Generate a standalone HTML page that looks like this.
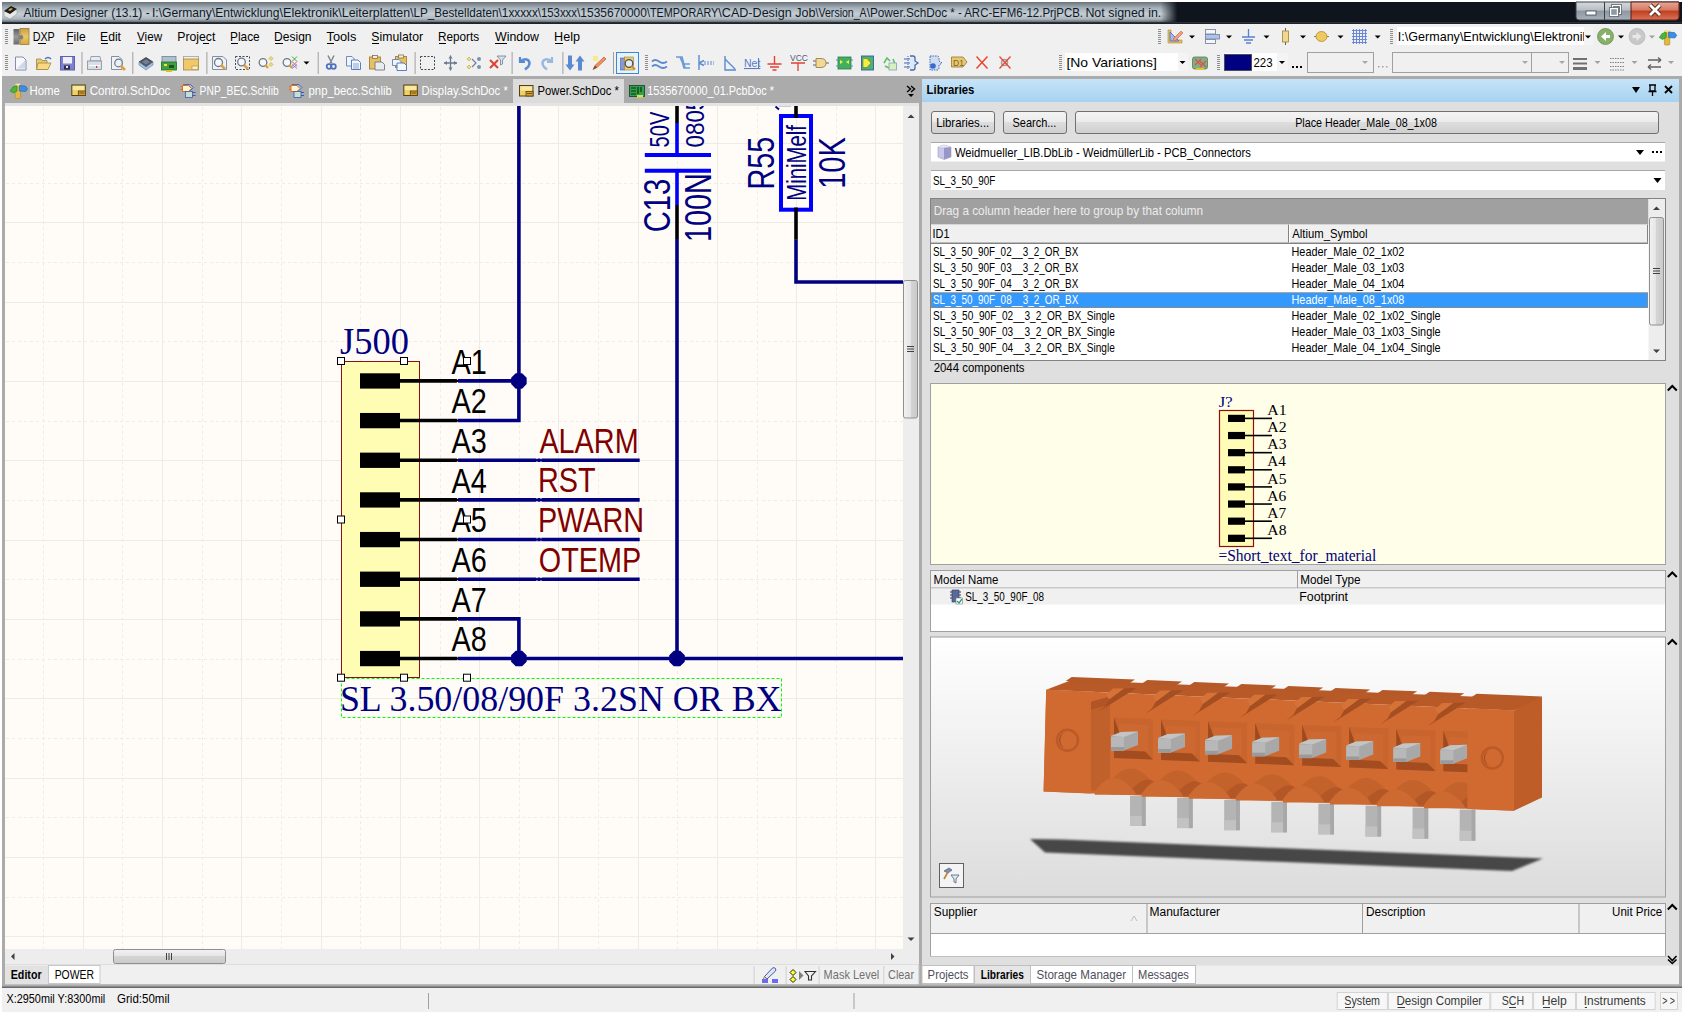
<!DOCTYPE html><html><head><meta charset='utf-8'><style>*{margin:0;padding:0}html,body{width:1684px;height:1014px;overflow:hidden;background:#fff;position:relative}text{white-space:pre}</style></head><body><svg width="1684" height="1014" viewBox="0 0 1684 1014" style="position:absolute;left:0;top:0"><rect x="0" y="0" width="1684" height="1014" fill="#ffffff" />
<rect x="2" y="2" width="1680" height="1010" fill="#f0f0f0" />
<defs>
<linearGradient id="gGlow" x1="0" y1="0" x2="0" y2="1">
 <stop offset="0" stop-color="#6a737b"/><stop offset="0.3" stop-color="#a6b0b8"/><stop offset="0.6" stop-color="#c4ced4"/><stop offset="0.85" stop-color="#acb6bc"/><stop offset="1" stop-color="#646e76"/></linearGradient>
<linearGradient id="gGlowH" x1="0" y1="0" x2="1" y2="0">
 <stop offset="0" stop-color="#fff" stop-opacity="1"/><stop offset="0.982" stop-color="#fff" stop-opacity="1"/><stop offset="0.996" stop-color="#fff" stop-opacity="0"/></linearGradient>
<mask id="mGlow"><rect x="2" y="2" width="1180" height="21" fill="url(#gGlowH)"/></mask>
<linearGradient id="gWinBtn" x1="0" y1="0" x2="0" y2="1">
 <stop offset="0" stop-color="#d6dade"/><stop offset="0.45" stop-color="#b8bec4"/><stop offset="0.5" stop-color="#8e98a2"/><stop offset="1" stop-color="#a8b0b8"/></linearGradient>
<linearGradient id="gClose" x1="0" y1="0" x2="0" y2="1">
 <stop offset="0" stop-color="#e8a898"/><stop offset="0.45" stop-color="#d47a64"/><stop offset="0.5" stop-color="#c2401e"/><stop offset="1" stop-color="#d8735a"/></linearGradient>
<linearGradient id="gHdr" x1="0" y1="0" x2="0" y2="1">
 <stop offset="0" stop-color="#c6e4f8"/><stop offset="1" stop-color="#a6d2f0"/></linearGradient>
<linearGradient id="gBtn" x1="0" y1="0" x2="0" y2="1">
 <stop offset="0" stop-color="#f4f4f4"/><stop offset="0.5" stop-color="#ebebeb"/><stop offset="0.5" stop-color="#dddddd"/><stop offset="1" stop-color="#cfcfcf"/></linearGradient>
<linearGradient id="g3d" x1="0" y1="0" x2="0" y2="1">
 <stop offset="0" stop-color="#ffffff"/><stop offset="1" stop-color="#dcdcdc"/></linearGradient>
<linearGradient id="gThumbV" x1="0" y1="0" x2="1" y2="0">
 <stop offset="0" stop-color="#f2f2f2"/><stop offset="0.5" stop-color="#e4e4e4"/><stop offset="0.5" stop-color="#d4d4d4"/><stop offset="1" stop-color="#cacaca"/></linearGradient>
<linearGradient id="gThumbH" x1="0" y1="0" x2="0" y2="1">
 <stop offset="0" stop-color="#f2f2f2"/><stop offset="0.5" stop-color="#e4e4e4"/><stop offset="0.5" stop-color="#d4d4d4"/><stop offset="1" stop-color="#cacaca"/></linearGradient>
</defs>
<rect x="2" y="2" width="1680" height="21" fill="#10151d" />
<rect x="2" y="2" width="1180" height="20" fill="url(#gGlow)" mask="url(#mGlow)"/>
<rect x="2" y="22" width="1680" height="1" fill="#2a3038" />
<rect x="2" y="23" width="1680" height="1" fill="#1e242c" />
<g transform="translate(3,5)"><path d="M1 7 L8 2 L14 5 L14 9 L7 14 L1 11 Z" fill="#e8e8e8" stroke="#9a9a9a" stroke-width="0.6"/><path d="M1 6 L8 1 L14 4 L7 9 Z" fill="#1c1c1c"/><path d="M5 5 L8 3 L10 4 L7 6 Z" fill="#d4a838"/></g>
<text transform="translate(23.60,17) scale(0.9553,1)" font-family="Liberation Sans" font-size="12.5" fill="#101828">Altium Designer (13.1) - </text>
<text transform="translate(151.91,17) scale(0.9704,1)" font-family="Liberation Sans" font-size="12.5" fill="#101828">I:\Germany</text>
<text transform="translate(211.90,17) scale(0.9648,1)" font-family="Liberation Sans" font-size="12.5" fill="#101828">\Entwicklung</text>
<text transform="translate(279.60,17) scale(1.0059,1)" font-family="Liberation Sans" font-size="12.5" fill="#101828">\Elektronik</text>
<text transform="translate(338.30,17) scale(0.9949,1)" font-family="Liberation Sans" font-size="12.5" fill="#101828">\Leiterplatten</text>
<text transform="translate(410.20,17) scale(0.9353,1)" font-family="Liberation Sans" font-size="12.5" fill="#101828">\LP_Bestelldaten</text>
<text transform="translate(498.60,17) scale(0.9406,1)" font-family="Liberation Sans" font-size="12.5" fill="#101828">\1xxxxx</text>
<text transform="translate(537.80,17) scale(0.9100,1)" font-family="Liberation Sans" font-size="12.5" fill="#101828">\153xxx</text>
<text transform="translate(577.00,17) scale(0.9590,1)" font-family="Liberation Sans" font-size="12.5" fill="#101828">\1535670000</text>
<text transform="translate(647.00,17) scale(0.8651,1)" font-family="Liberation Sans" font-size="12.5" fill="#101828">\TEMPORARY</text>
<text transform="translate(718.30,17) scale(1.0077,1)" font-family="Liberation Sans" font-size="12.5" fill="#101828">\CAD-Design Job</text>
<text transform="translate(815.60,17) scale(0.8453,1)" font-family="Liberation Sans" font-size="12.5" fill="#101828">\Version_A</text>
<text transform="translate(866.70,17) scale(0.9423,1)" font-family="Liberation Sans" font-size="12.5" fill="#101828">\Power.SchDoc </text>
<text transform="translate(950.27,17) scale(0.9158,1)" font-family="Liberation Sans" font-size="12.5" fill="#101828">* - ARC-EFM6-12.PrjPCB. </text>
<text transform="translate(1085.41,17) scale(0.9936,1)" font-family="Liberation Sans" font-size="12.5" fill="#101828" >Not signed in.</text>
<path d="M1576 2 L1679 2 L1679 17 Q1679 20 1676 20 L1579 20 Q1576 20 1576 17 Z" fill="url(#gWinBtn)" stroke="#3a4048" stroke-width="1"/>
<path d="M1631 2 L1679 2 L1679 17 Q1679 20 1676 20 L1631 20 Z" fill="url(#gClose)" stroke="#5a1a10" stroke-width="1"/>
<line x1="1604.5" y1="2" x2="1604.5" y2="20" stroke="#3a4048" stroke-width="1" />
<rect x="1586" y="11" width="10" height="4" fill="#ffffff" stroke="#404850" stroke-width="0.8"/>
<rect x="1612.5" y="5.5" width="8" height="8" fill="none" stroke="#3a4048" stroke-width="2.6"/>
<rect x="1612.5" y="5.5" width="8" height="8" fill="none" stroke="#ffffff" stroke-width="1.4"/>
<rect x="1610.5" y="8.5" width="7" height="7" fill="#8a9aa8" stroke="#3a4048" stroke-width="2.6"/>
<rect x="1610.5" y="8.5" width="7" height="7" fill="#8a9aa8" stroke="#ffffff" stroke-width="1.4"/>
<path d="M1650 5 L1660 15 M1660 5 L1650 15" stroke="#5a2a20" stroke-width="4.6"/><path d="M1650 5 L1660 15 M1660 5 L1650 15" stroke="#ffffff" stroke-width="2.8"/>
<rect x="5" y="29" width="3" height="1" fill="#8e8e8e" />
<rect x="5" y="31" width="3" height="1" fill="#8e8e8e" />
<rect x="5" y="33" width="3" height="1" fill="#8e8e8e" />
<rect x="5" y="35" width="3" height="1" fill="#8e8e8e" />
<rect x="5" y="37" width="3" height="1" fill="#8e8e8e" />
<rect x="5" y="39" width="3" height="1" fill="#8e8e8e" />
<rect x="5" y="41" width="3" height="1" fill="#8e8e8e" />
<rect x="5" y="43" width="3" height="1" fill="#8e8e8e" />
<defs><linearGradient id="gDxpG" x1="0" y1="0" x2="0" y2="1"><stop offset="0" stop-color="#606060"/><stop offset="0.5" stop-color="#9a9a9a"/><stop offset="1" stop-color="#6a6a6a"/></linearGradient><linearGradient id="gDxpY" x1="0" y1="0" x2="0" y2="1"><stop offset="0" stop-color="#c8a048"/><stop offset="0.5" stop-color="#e8c868"/><stop offset="1" stop-color="#d0a840"/></linearGradient></defs>
<g transform="translate(13.5,29)"><rect x="0" y="0" width="6" height="15.5" fill="url(#gDxpG)"/><rect x="6.5" y="-0.5" width="9" height="16" fill="url(#gDxpY)" stroke="#a07a30" stroke-width="0.8"/><path d="M6.5 4.5 A4 4 0 0 1 6.5 12 Z" fill="#f4ecd8" stroke="#a07a30" stroke-width="0.6"/><circle cx="7.3" cy="8.3" r="2.4" fill="#808080"/></g>
<text transform="translate(32.64,41) scale(0.8981,1)" font-family="Liberation Sans" font-size="12" fill="#000" >DXP</text>
<text transform="translate(66.23,41) scale(1.0067,1)" font-family="Liberation Sans" font-size="12" fill="#000" >File</text>
<text transform="translate(100.02,41) scale(1.0163,1)" font-family="Liberation Sans" font-size="12" fill="#000" >Edit</text>
<text transform="translate(137.08,41) scale(0.9696,1)" font-family="Liberation Sans" font-size="12" fill="#000" >View</text>
<text transform="translate(177.22,41) scale(1.0210,1)" font-family="Liberation Sans" font-size="12" fill="#000" >Project</text>
<text transform="translate(230.05,41) scale(0.9874,1)" font-family="Liberation Sans" font-size="12" fill="#000" >Place</text>
<text transform="translate(274.04,41) scale(1.0045,1)" font-family="Liberation Sans" font-size="12" fill="#000" >Design</text>
<text transform="translate(326.54,41) scale(1.0646,1)" font-family="Liberation Sans" font-size="12" fill="#000" >Tools</text>
<text transform="translate(371.29,41) scale(1.0216,1)" font-family="Liberation Sans" font-size="12" fill="#000" >Simulator</text>
<text transform="translate(437.96,41) scale(0.9813,1)" font-family="Liberation Sans" font-size="12" fill="#000" >Reports</text>
<text transform="translate(495.00,41) scale(1.0305,1)" font-family="Liberation Sans" font-size="12" fill="#000" >Window</text>
<text transform="translate(554.09,41) scale(1.0524,1)" font-family="Liberation Sans" font-size="12" fill="#000" >Help</text>
<rect x="38" y="43" width="8" height="1" fill="#000" />
<rect x="67" y="43" width="6" height="1" fill="#000" />
<rect x="101" y="43" width="7" height="1" fill="#000" />
<rect x="137" y="43" width="8" height="1" fill="#000" />
<rect x="203" y="43" width="6" height="1" fill="#000" />
<rect x="231" y="43" width="7" height="1" fill="#000" />
<rect x="275" y="43" width="8" height="1" fill="#000" />
<rect x="327" y="43" width="7" height="1" fill="#000" />
<rect x="372" y="43" width="7" height="1" fill="#000" />
<rect x="439" y="43" width="7" height="1" fill="#000" />
<rect x="495" y="43" width="12" height="1" fill="#000" />
<rect x="555" y="43" width="8" height="1" fill="#000" />
<rect x="1158" y="29" width="3" height="1" fill="#8e8e8e" />
<rect x="1158" y="31" width="3" height="1" fill="#8e8e8e" />
<rect x="1158" y="33" width="3" height="1" fill="#8e8e8e" />
<rect x="1158" y="35" width="3" height="1" fill="#8e8e8e" />
<rect x="1158" y="37" width="3" height="1" fill="#8e8e8e" />
<rect x="1158" y="39" width="3" height="1" fill="#8e8e8e" />
<rect x="1158" y="41" width="3" height="1" fill="#8e8e8e" />
<rect x="1158" y="43" width="3" height="1" fill="#8e8e8e" />
<g transform="translate(1167,29)"><path d="M1 14 L15 14 L15 11 L4 11 L4 1 L1 1 Z" fill="#e8c060" stroke="#b08830" stroke-width="0.6"/><path d="M3 3 L3 12 L12 12 Z" fill="#a8b8e8" stroke="#4868b8" stroke-width="0.8"/><path d="M6 10 L14 2 L16 4 L8 12 Z" fill="#f0a080" stroke="#c06040" stroke-width="0.6"/></g>
<path d="M1189 35.5 L1195 35.5 L1192 38.5 Z" fill="#000"/>
<g transform="translate(1205,29)"><rect x="0.5" y="0.5" width="10" height="4.5" fill="#f4f6fa" stroke="#8088a0" stroke-width="0.9"/><rect x="0.5" y="5.5" width="14" height="4.5" fill="#a8c4f0" stroke="#8088a0" stroke-width="0.9"/><rect x="0.5" y="10.5" width="10" height="4" fill="#f4f6fa" stroke="#8088a0" stroke-width="0.9"/></g>
<path d="M1226 35.5 L1232 35.5 L1229 38.5 Z" fill="#000"/>
<g transform="translate(1241,29)"><path d="M7.5 0 L7.5 8 M1 8 L14 8 M3 11 L12 11 M5 14 L10 14" stroke="#5880d0" stroke-width="1.3"/></g>
<path d="M1263.5 35.5 L1269.5 35.5 L1266.5 38.5 Z" fill="#000"/>
<g transform="translate(1282,28)"><path d="M3.5 0 L3.5 17" stroke="#606060" stroke-width="1"/><rect x="0.5" y="3" width="6" height="11" fill="#f0d890" stroke="#a08030" stroke-width="0.8"/></g>
<path d="M1300 35.5 L1306 35.5 L1303 38.5 Z" fill="#000"/>
<g transform="translate(1314,29)"><path d="M0 7.5 L15 7.5" stroke="#808080" stroke-width="1"/><ellipse cx="7.5" cy="7.5" rx="5.5" ry="5" fill="#f0c860" stroke="#b08830" stroke-width="0.8"/></g>
<path d="M1337.5 35.5 L1343.5 35.5 L1340.5 38.5 Z" fill="#000"/>
<g transform="translate(1352,29)"><path d="M0 1.5 H15 M0 4.5 H15 M0 7.5 H15 M0 10.5 H15 M0 13.5 H15 M1.5 0 V15 M4.5 0 V15 M7.5 0 V15 M10.5 0 V15 M13.5 0 V15" stroke="#6a88d8" stroke-width="1"/></g>
<path d="M1374.7 35.5 L1380.7 35.5 L1377.7 38.5 Z" fill="#000"/>
<rect x="1390" y="29" width="3" height="1" fill="#8e8e8e" />
<rect x="1390" y="31" width="3" height="1" fill="#8e8e8e" />
<rect x="1390" y="33" width="3" height="1" fill="#8e8e8e" />
<rect x="1390" y="35" width="3" height="1" fill="#8e8e8e" />
<rect x="1390" y="37" width="3" height="1" fill="#8e8e8e" />
<rect x="1390" y="39" width="3" height="1" fill="#8e8e8e" />
<rect x="1390" y="41" width="3" height="1" fill="#8e8e8e" />
<rect x="1390" y="43" width="3" height="1" fill="#8e8e8e" />
<rect x="1397" y="27" width="196" height="18" fill="#ffffff" />
<rect x="1584" y="27" width="9" height="18" fill="#f4f4f4" />
<path d="M1585 35.5 L1591 35.5 L1588 38.5 Z" fill="#000"/>
<defs><clipPath id="clipNav"><rect x="1397" y="25" width="187" height="22"/></clipPath></defs><g clip-path="url(#clipNav)">
<text transform="translate(1397.87,41) scale(1.0458,1)" font-family="Liberation Sans" font-size="12" fill="#000" >I:\Germany\Entwicklung\Elektronik</text>
</g>
<g transform="translate(1597,28)"><circle cx="8.5" cy="8.5" r="8" fill="#88b068" stroke="#6a9050" stroke-width="0.8"/><path d="M4 8.5 L9 4 L9 7 L13 7 L13 10 L9 10 L9 13 Z" fill="#ffffff"/></g>
<path d="M1618 35.5 L1624 35.5 L1621 38.5 Z" fill="#000"/>
<g transform="translate(1629,28)"><circle cx="8" cy="8.5" r="8" fill="#c8c8c8" stroke="#b8b8b8" stroke-width="0.8"/><path d="M12.5 8.5 L7.5 4 L7.5 7 L3.5 7 L3.5 10 L7.5 10 L7.5 13 Z" fill="#e8e8e8"/></g>
<path d="M1649 35.5 L1655 35.5 L1652 38.5 Z" fill="#a0a0a0"/>
<g transform="translate(1659,29)"><rect x="5.4" y="2" width="5.4" height="14" rx="1" fill="#e4b840" stroke="#b08828" stroke-width="0.6"/><ellipse cx="8.1" cy="2.2" rx="2.8" ry="1.3" fill="#f4e4a0"/><path d="M0.3 8.5 L3 4.6 L7.2 3.2 L7.2 8.6 L3.4 10.4 Z" fill="#48b838" stroke="#2a8020" stroke-width="0.6"/><path d="M9.6 3 L15.6 3.6 L17.8 6.4 L15.8 9 L9.6 8.6 Z" fill="#3a8ee8" stroke="#2462b0" stroke-width="0.6"/></g>
<rect x="5" y="55" width="3" height="1" fill="#8e8e8e" />
<rect x="5" y="57" width="3" height="1" fill="#8e8e8e" />
<rect x="5" y="59" width="3" height="1" fill="#8e8e8e" />
<rect x="5" y="61" width="3" height="1" fill="#8e8e8e" />
<rect x="5" y="63" width="3" height="1" fill="#8e8e8e" />
<rect x="5" y="65" width="3" height="1" fill="#8e8e8e" />
<rect x="5" y="67" width="3" height="1" fill="#8e8e8e" />
<rect x="5" y="69" width="3" height="1" fill="#8e8e8e" />
<g transform="translate(15,56.5)"><path d="M0.5 0.5 L8 0.5 L11 3.5 L11 13.5 L0.5 13.5 Z" fill="#f8f8fc" stroke="#8090a8" stroke-width="1"/><path d="M2 12 L10 12 L10 4 Z" fill="#d0d8e8"/></g>
<g transform="translate(36,56)"><path d="M0.5 3 L5 3 L6 4.5 L11 4.5 L11 13.5 L0.5 13.5 Z" fill="#e8c870" stroke="#a08848" stroke-width="0.8"/><path d="M2 7 L15 7 L12 13.5 L0.5 13.5 Z" fill="#f8d880" stroke="#a08848" stroke-width="0.8"/><path d="M9 3 Q12 0 15 3" stroke="#4878c0" stroke-width="1.6" fill="none"/></g>
<g transform="translate(60,56)"><rect x="0.5" y="0.5" width="14" height="13.5" fill="#8080d0" stroke="#6060b0" stroke-width="1"/><rect x="3" y="1" width="9" height="6.5" fill="#f0f0f8"/><rect x="4" y="9.5" width="6" height="4" fill="#303040"/><rect x="6" y="10" width="2" height="2" fill="#f0f0f0"/></g>
<rect x="81.5" y="52" width="1" height="22" fill="#a0a0a0" />
<g transform="translate(87,56)"><path d="M4 0.5 L13 0.5 L14 5 L3 5 Z" fill="#e8ecf0" stroke="#8090a0" stroke-width="0.8"/><rect x="0.5" y="5" width="14" height="8.5" fill="#d8dee4" stroke="#8090a0" stroke-width="0.8"/><rect x="2" y="9" width="11" height="1" fill="#ffffff"/><rect x="9" y="10" width="1.2" height="1.8" fill="#d02020"/></g>
<g transform="translate(111,56)"><path d="M0.5 0.5 L8 0.5 L11 3.5 L11 13.5 L0.5 13.5 Z" fill="#f0f2f8" stroke="#8090a8" stroke-width="1"/><circle cx="7.5" cy="7" r="3.8" fill="#e8f0f8" stroke="#707880" stroke-width="1.2"/><path d="M10 10 L14 14" stroke="#e0a040" stroke-width="2.5"/></g>
<rect x="132.3" y="52" width="1" height="22" fill="#a0a0a0" />
<g transform="translate(138,56)"><path d="M1 6 L8 1.5 L15 6 L8 11 Z" fill="#505868" stroke="#303848" stroke-width="0.8"/><path d="M1 6 L1 9 L8 14 L15 9 L15 6 L8 11 Z" fill="#a8c0e0" stroke="#6080a8" stroke-width="0.6"/><path d="M4 6 L8 3.5 L12 6 L8 8.5 Z" fill="#788090"/></g>
<g transform="translate(161,56)"><rect x="1" y="0.5" width="14" height="7" fill="#b0c0d0" stroke="#708090" stroke-width="0.8"/><rect x="0.5" y="6" width="15" height="8" fill="#40a040" stroke="#207020" stroke-width="0.8"/><rect x="3" y="8" width="3" height="2" fill="#f0e040"/><rect x="8" y="9" width="5" height="3" fill="#205020"/><rect x="5" y="14" width="6" height="2" fill="#e0c020"/></g>
<g transform="translate(183,56)"><rect x="0.5" y="0.5" width="15" height="3" fill="#f0f0f0" stroke="#a0a0a0" stroke-width="0.8"/><rect x="0.5" y="3" width="15" height="11" fill="#f0c868" stroke="#a08848" stroke-width="0.8"/><rect x="9" y="10" width="6" height="3.5" fill="#fff0c0" stroke="#a08848" stroke-width="0.6"/></g>
<rect x="206.4" y="52" width="1" height="22" fill="#a0a0a0" />
<g transform="translate(212,56)"><path d="M0.5 0.5 L11 0.5 L14.5 4 L14.5 13.5 L0.5 13.5 Z" fill="#eef2f8" stroke="#8090a8" stroke-width="1"/><circle cx="6.5" cy="6.5" r="4" fill="#f4f8fc" stroke="#707880" stroke-width="1.3"/><path d="M9 9 L13 13" stroke="#e0a040" stroke-width="2.5"/></g>
<g transform="translate(235,56)"><rect x="0.5" y="0.5" width="14" height="13" fill="none" stroke="#404860" stroke-width="1" stroke-dasharray="2 1.5"/><circle cx="6.5" cy="6" r="3.8" fill="#f4f8fc" stroke="#707880" stroke-width="1.3"/><path d="M9 9 L13 13" stroke="#e0a040" stroke-width="2.5"/></g>
<g transform="translate(258,55.5)"><circle cx="5" cy="7" r="3.8" fill="#f4f8fc" stroke="#707880" stroke-width="1.3"/><path d="M7.5 9.5 L10 12.5" stroke="#e0a040" stroke-width="2.5"/><path d="M13 1 L15 3 L13 5 L11 3 Z M13 7 L15 9 L13 11 L11 9 Z" fill="#f0e070" stroke="#c0a030" stroke-width="0.6"/></g>
<g transform="translate(282,55.5)"><circle cx="5" cy="7" r="3.8" fill="#f4f8fc" stroke="#707880" stroke-width="1.3"/><path d="M7.5 9.5 L10 12.5" stroke="#e0a040" stroke-width="2.5"/><path d="M10 1 L15 6 M15 1 L10 6" stroke="#40b040" stroke-width="1"/><path d="M10 6 L15 11 M15 6 L10 11" stroke="#d06080" stroke-width="1"/><path d="M10 9 L15 13 M15 9 L10 13" stroke="#8080e0" stroke-width="1"/></g>
<path d="M303.5 61.5 L309.5 61.5 L306.5 64.5 Z" fill="#000"/>
<rect x="317.7" y="52" width="1" height="22" fill="#a0a0a0" />
<g transform="translate(326,55.5)"><path d="M2 0 L6 8 M8 0 L4 8" stroke="#808890" stroke-width="1.5"/><circle cx="3" cy="11" r="2.3" fill="none" stroke="#5070c0" stroke-width="1.8"/><circle cx="7.5" cy="11" r="2.3" fill="none" stroke="#5070c0" stroke-width="1.8"/></g>
<g transform="translate(346,56)"><path d="M0.5 0.5 L6 0.5 L8 2.5 L8 10 L0.5 10 Z" fill="#f0f4fc" stroke="#6080b8" stroke-width="0.9"/><path d="M5.5 4 L12 4 L14.5 6.5 L14.5 13.5 L5.5 13.5 Z" fill="#f4f8ff" stroke="#4870b8" stroke-width="0.9"/><path d="M7 8 H13 M7 10 H13 M7 12 H13" stroke="#7090c8" stroke-width="0.8"/></g>
<g transform="translate(369,55)"><rect x="0.5" y="2" width="11" height="12" fill="#e8c060" stroke="#a08040" stroke-width="0.9"/><rect x="3.5" y="0.5" width="5" height="3" fill="#f8f0d0" stroke="#807050" stroke-width="0.8"/><path d="M6 7 L13 7 L15.5 9.5 L15.5 15 L6 15 Z" fill="#e8ecf0" stroke="#707880" stroke-width="0.9"/></g>
<g transform="translate(392,54.5)"><rect x="3.5" y="2" width="11" height="11" fill="#e8c060" stroke="#a08040" stroke-width="0.9"/><rect x="6.5" y="0.5" width="5" height="3" fill="#f8f0d0" stroke="#807050" stroke-width="0.8"/><path d="M0.5 5 L7 5 L9 7 L9 11 L0.5 11 Z" fill="#f0f4fc" stroke="#6080b8" stroke-width="0.9"/><path d="M5 8.5 L12 8.5 L14.5 11 L14.5 16 L5 16 Z" fill="#f4f8ff" stroke="#4870b8" stroke-width="0.9"/></g>
<rect x="414.6" y="52" width="1" height="22" fill="#a0a0a0" />
<g transform="translate(420,56)"><rect x="0.5" y="0.5" width="14" height="13" fill="none" stroke="#404858" stroke-width="1" stroke-dasharray="2 1.5"/></g>
<g transform="translate(444,55.5)"><path d="M6.5 0 V15 M0 7.5 H13" stroke="#6a7a90" stroke-width="1.3"/><path d="M6.5 0 L4.5 3 H8.5 Z M6.5 15 L4.5 12 H8.5 Z M0 7.5 L3 5.5 V9.5 Z M13 7.5 L10 5.5 V9.5 Z" fill="#6a7a90"/></g>
<g transform="translate(467,56)"><path d="M2 1 L4 3 L2 5 L0 3 Z M2 9 L4 11 L2 13 L0 11 Z" fill="#f0e070" stroke="#c0a030" stroke-width="0.6"/><path d="M5 3 L9 7 L5 11" stroke="#7080a0" stroke-width="1.2" fill="none"/><circle cx="12" cy="3" r="2" fill="#8090b0"/><circle cx="12" cy="11" r="2" fill="#8090b0"/></g>
<g transform="translate(489,55)"><path d="M1 5 L9 13 M9 5 L1 13" stroke="#e04030" stroke-width="2"/><path d="M8 1 L17 1 L13.5 5 L13.5 9 L11.5 10 L11.5 5 Z" fill="#d8e0e8" stroke="#708090" stroke-width="0.8"/></g>
<rect x="511.6" y="52" width="1" height="22" fill="#a0a0a0" />
<g transform="translate(518,56)"><path d="M2 1 L2 6 L7 6" fill="none" stroke="#5a8ad0" stroke-width="2.2"/><path d="M2.5 5.5 Q6 2 10 4 Q13 7 10 11 L7 13.5" fill="none" stroke="#5a8ad0" stroke-width="2.5"/></g>
<g transform="translate(541,56)"><path d="M11 1 L11 6 L6 6" fill="none" stroke="#9ab8e0" stroke-width="2.2"/><path d="M10.5 5.5 Q7 2 3 4 Q0 7 3 11 L6 13.5" fill="none" stroke="#9ab8e0" stroke-width="2.5"/></g>
<rect x="562.4" y="52" width="1" height="22" fill="#a0a0a0" />
<g transform="translate(566,55.5)"><path d="M2 0 H6 V9 H8.5 L4 15 L-0.5 9 H2 Z" fill="#5a8ad0"/><path d="M12 15 H16 V6 H18.5 L14 0 L9.5 6 H12 Z" fill="#5a8ad0"/></g>
<g transform="translate(592,55.5)"><path d="M1 14 L3 10 L12 1.5 L14 3.5 L5 12 Z" fill="#f0905a" stroke="#c06030" stroke-width="0.7"/><path d="M1 14 L3 10 L5 12 Z" fill="#705040"/><rect x="1" y="0.5" width="5" height="5" fill="#f8e870" opacity="0.8"/></g>
<rect x="613" y="52" width="1" height="22" fill="#a0a0a0" />
<rect x="616.5" y="52.5" width="22" height="21" fill="#e8f2fc" stroke="#3a88d8" stroke-width="1"/>
<g transform="translate(620,55)"><rect x="0.5" y="3" width="4" height="12" fill="#8898d0" stroke="#5060a0" stroke-width="0.6"/><rect x="4.5" y="2" width="9" height="13" fill="#e8d070" stroke="#a08030" stroke-width="0.6"/><circle cx="9" cy="8.5" r="3.8" fill="#e0ecf8" stroke="#505050" stroke-width="1.3"/><path d="M11.5 11 L15 14.5" stroke="#d09030" stroke-width="2.3"/></g>
<rect x="645" y="55" width="3" height="1" fill="#8e8e8e" />
<rect x="645" y="57" width="3" height="1" fill="#8e8e8e" />
<rect x="645" y="59" width="3" height="1" fill="#8e8e8e" />
<rect x="645" y="61" width="3" height="1" fill="#8e8e8e" />
<rect x="645" y="63" width="3" height="1" fill="#8e8e8e" />
<rect x="645" y="65" width="3" height="1" fill="#8e8e8e" />
<rect x="645" y="67" width="3" height="1" fill="#8e8e8e" />
<rect x="645" y="69" width="3" height="1" fill="#8e8e8e" />
<g transform="translate(651,55.5)"><path d="M1 6 Q4 3 8 6 Q12 9 16 6 M1 11 Q4 8 8 11 Q12 14 16 11" stroke="#5a8ad0" stroke-width="1.8" fill="none"/></g>
<g transform="translate(675,55)"><path d="M1 2 H7 L10 13 M5 2 L8 9 H15 M7 6 L9 13 H15" stroke="#6a9ad8" stroke-width="1.6" fill="none"/></g>
<g transform="translate(698,55)"><path d="M1 0 L1 15 M1 8 L6 5.5 M1 8 L6 10.5" stroke="#5a8ad0" stroke-width="1.4" fill="none"/><path d="M6 7 H16 M6 9 H16" stroke="#5a8ad0" stroke-width="1" stroke-dasharray="2 1"/></g>
<g transform="translate(723,55)"><path d="M2 1 L2 15 L13 15 M2 4 L12 14" stroke="#5a8ad0" stroke-width="1.4" fill="none"/></g>
<g transform="translate(744,57)"><text x="0" y="10" font-family="Liberation Sans" font-size="10.5" fill="#5a7ac8" text-decoration="underline">Net</text><rect x="14" y="1" width="1" height="10" fill="#5a7ac8"/></g>
<g transform="translate(767,56)"><path d="M7.5 0 V8 M0.5 8 H14.5 M3 11 H12 M5.5 14 H9.5" stroke="#e04030" stroke-width="1.4"/></g>
<g transform="translate(790,54)"><text x="0" y="7" font-family="Liberation Sans" font-size="8.5" fill="#4a5a78">VCC</text><path d="M1 9 H15 M8 9 V17" stroke="#e04030" stroke-width="1.3"/></g>
<g transform="translate(813,56)"><path d="M0 5 H3 M0 9 H3 M12.5 7 H16" stroke="#606060" stroke-width="1"/><path d="M3 2.5 H8 Q13 2.5 13 7 Q13 11.5 8 11.5 H3 Z" fill="#f0d898" stroke="#a08040" stroke-width="0.9"/></g>
<g transform="translate(836,56)"><rect x="2" y="1" width="13" height="12" fill="#40b060" stroke="#307848" stroke-width="0.8"/><path d="M0 4 H2 M0 10 H2 M15 4 H17 M15 10 H17" stroke="#5a8ad0" stroke-width="1"/><path d="M4 4 L7 6 L4 8 Z M13 4 L10 6 L13 8 Z" fill="#f0f040"/></g>
<g transform="translate(861,55.5)"><rect x="0.5" y="0.5" width="12" height="14" fill="#50b070" stroke="#3060a0" stroke-width="0.9"/><path d="M2 3 H6 L10 7.5 L6 12 H2 Z" fill="#f0f040" stroke="#807020" stroke-width="0.6"/></g>
<g transform="translate(882,55)"><path d="M2 8 L5 3 L8 6 M11 4 L13 9 L10 10" stroke="#60c060" stroke-width="1.6" fill="none"/><path d="M3 11 L7 13" stroke="#60c060" stroke-width="1.6"/><rect x="7" y="8" width="7.5" height="7" fill="#d8f0c0" stroke="#80a0c0" stroke-width="0.8"/></g>
<g transform="translate(904,55)"><path d="M6 1 H9 Q11 1 11 3 V6 L14 8 L11 10 V13 Q11 15 9 15 H6" stroke="#4a6aa8" stroke-width="1.3" fill="#dde8f8"/><path d="M0 4 H6 M0 8 H6 M0 12 H6" stroke="#3a6ab8" stroke-width="1.2"/><path d="M4 1 V15" stroke="#3a6ab8" stroke-width="1" stroke-dasharray="1 1"/></g>
<g transform="translate(929,55)"><path d="M1 1 H8 Q10 1 10 3 V6 L13 8 L10 10 V13 Q10 15 8 15 H1 Z" fill="#d0dcf0" stroke="#3a6ab8" stroke-width="1" stroke-dasharray="1.5 1"/><circle cx="4" cy="11" r="2.8" fill="#3a6ad0"/></g>
<g transform="translate(951,56.5)"><path d="M0.5 0.5 H12 L16 5.5 L12 10.5 H0.5 Z" fill="#e8c870" stroke="#a08040" stroke-width="0.9"/><text x="2" y="9" font-family="Liberation Sans" font-size="8.5" fill="#806020">D1</text></g>
<g transform="translate(976,56)"><path d="M0.5 0.5 L11.5 12.5 M11.5 0.5 L0.5 12.5" stroke="#e84830" stroke-width="1.5"/></g>
<g transform="translate(999,56)"><circle cx="5.5" cy="6.5" r="3" fill="none" stroke="#a0a0a0" stroke-width="1.5"/><path d="M0.5 0.5 L11.5 12.5 M11.5 0.5 L0.5 12.5" stroke="#e84830" stroke-width="1.3"/></g>
<rect x="1059" y="55" width="3" height="1" fill="#8e8e8e" />
<rect x="1059" y="57" width="3" height="1" fill="#8e8e8e" />
<rect x="1059" y="59" width="3" height="1" fill="#8e8e8e" />
<rect x="1059" y="61" width="3" height="1" fill="#8e8e8e" />
<rect x="1059" y="63" width="3" height="1" fill="#8e8e8e" />
<rect x="1059" y="65" width="3" height="1" fill="#8e8e8e" />
<rect x="1059" y="67" width="3" height="1" fill="#8e8e8e" />
<rect x="1059" y="69" width="3" height="1" fill="#8e8e8e" />
<rect x="1065" y="53" width="123" height="18" fill="#ffffff" />
<rect x="1178" y="53" width="10" height="18" fill="#f4f4f4" />
<path d="M1179.5 61.0 L1185.5 61.0 L1182.5 64.0 Z" fill="#000"/>
<text transform="translate(1066.42,67) scale(1.1627,1)" font-family="Liberation Sans" font-size="12" fill="#000" >[No Variations]</text>
<g transform="translate(1192,56)"><rect x="0.5" y="1" width="15" height="12" rx="2" fill="#80b080" stroke="#508050" stroke-width="0.8"/><path d="M3 3 L9 9 M9 3 L3 9" stroke="#e05050" stroke-width="1.2"/><path d="M8 5 L14 11 M14 5 L8 11" stroke="#e05050" stroke-width="1.2"/><rect x="4" y="12" width="8" height="2" fill="#e0c040"/></g>
<rect x="1217" y="55" width="3" height="1" fill="#8e8e8e" />
<rect x="1217" y="57" width="3" height="1" fill="#8e8e8e" />
<rect x="1217" y="59" width="3" height="1" fill="#8e8e8e" />
<rect x="1217" y="61" width="3" height="1" fill="#8e8e8e" />
<rect x="1217" y="63" width="3" height="1" fill="#8e8e8e" />
<rect x="1217" y="65" width="3" height="1" fill="#8e8e8e" />
<rect x="1217" y="67" width="3" height="1" fill="#8e8e8e" />
<rect x="1217" y="69" width="3" height="1" fill="#8e8e8e" />
<rect x="1224" y="53" width="64" height="18" fill="#ffffff" />
<rect x="1224.5" y="54.5" width="27" height="16" fill="#000080" stroke="#404040" stroke-width="0.8"/>
<text transform="translate(1253.43,67) scale(0.9554,1)" font-family="Liberation Sans" font-size="12" fill="#000" >223</text>
<rect x="1277" y="53" width="11" height="18" fill="#f4f4f4" />
<path d="M1279 61.0 L1285 61.0 L1282 64.0 Z" fill="#000"/>
<rect x="1292" y="66" width="2" height="2" fill="#000" />
<rect x="1296" y="66" width="2" height="2" fill="#000" />
<rect x="1300" y="66" width="2" height="2" fill="#000" />
<rect x="1307.5" y="52.5" width="66" height="20" fill="#f0f0f0" stroke="#a0a0a0" stroke-width="1"/>
<path d="M1362 61.0 L1368 61.0 L1365 64.0 Z" fill="#a8a8a8"/>
<rect x="1378" y="66" width="1.5" height="1.5" fill="#a0a0a0" />
<rect x="1382" y="66" width="1.5" height="1.5" fill="#a0a0a0" />
<rect x="1386" y="66" width="1.5" height="1.5" fill="#a0a0a0" />
<rect x="1392.5" y="52.5" width="139" height="20" fill="#f0f0f0" stroke="#a0a0a0" stroke-width="1"/>
<path d="M1522 61.0 L1528 61.0 L1525 64.0 Z" fill="#a8a8a8"/>
<rect x="1531.5" y="52.5" width="37" height="20" fill="#f0f0f0" stroke="#a0a0a0" stroke-width="1"/>
<path d="M1559 61.0 L1565 61.0 L1562 64.0 Z" fill="#a8a8a8"/>
<g transform="translate(1573,57)"><rect x="0" y="1" width="14" height="2" fill="#707070"/><rect x="0" y="5.5" width="14" height="2" fill="#707070"/><rect x="0" y="10" width="14" height="3" fill="#707070"/></g>
<path d="M1594.5 61.0 L1600.5 61.0 L1597.5 64.0 Z" fill="#a0a0a0"/>
<g transform="translate(1610,57)"><path d="M0 1.5 H15 M0 5.5 H15 M0 9.5 H15 M0 13 H15" stroke="#808080" stroke-width="1" stroke-dasharray="1.5 1"/></g>
<path d="M1631.5 61.0 L1637.5 61.0 L1634.5 64.0 Z" fill="#a0a0a0"/>
<g transform="translate(1647,56)"><path d="M1 4 H14 M1 11 H14" stroke="#606060" stroke-width="1.3"/><path d="M14 4 L11 1.5 M14 4 L11 6.5 M1 11 L4 8.5 M1 11 L4 13.5" stroke="#606060" stroke-width="1.3"/></g>
<path d="M1668 61.0 L1674 61.0 L1671 64.0 Z" fill="#a0a0a0"/>
<rect x="2" y="76" width="1680" height="912" fill="#ababab" />
<g transform="translate(9.8,82.5)"><rect x="5.4" y="2" width="5.4" height="14" rx="1" fill="#e4b840" stroke="#b08828" stroke-width="0.6"/><ellipse cx="8.1" cy="2.2" rx="2.8" ry="1.3" fill="#f4e4a0"/><path d="M0.3 8.5 L3 4.6 L7.2 3.2 L7.2 8.6 L3.4 10.4 Z" fill="#48b838" stroke="#2a8020" stroke-width="0.6"/><path d="M9.6 3 L15.6 3.6 L17.8 6.4 L15.8 9 L9.6 8.6 Z" fill="#3a8ee8" stroke="#2462b0" stroke-width="0.6"/></g>
<text transform="translate(29.39,95) scale(0.9514,1)" font-family="Liberation Sans" font-size="12" fill="#ffffff" >Home</text>
<g transform="translate(71.3,84.5)"><rect x="0.5" y="0.5" width="13.5" height="10.5" fill="#f0d060" stroke="#504020" stroke-width="1"/><rect x="1.5" y="1.5" width="11.5" height="4" fill="#f8e8a0"/><rect x="7" y="6.5" width="7" height="4.5" fill="#e0a020" stroke="#504020" stroke-width="0.8"/><path d="M8 8.5 H13" stroke="#504020" stroke-width="0.8"/></g>
<text transform="translate(89.72,95) scale(0.9610,1)" font-family="Liberation Sans" font-size="12" fill="#ffffff" >Control.SchDoc</text>
<g transform="translate(180.5,82.5)"><path d="M3 2 H10 L13 5 L10 8 H3 Z" fill="#9ab8e8" stroke="#3a5ab0" stroke-width="0.8"/><path d="M0 4 H3 M0 7 H3" stroke="#e07020" stroke-width="1.2"/><path d="M2 3 H8 L11 6 L8 9 H2 Z" fill="#fff4d0" stroke="#e07020" stroke-width="1"/><rect x="5" y="9" width="7" height="6" fill="#c0e0d8" stroke="#3a5ab0" stroke-width="0.8"/><path d="M12 10 H15 M12 13 H15" stroke="#3a5ab0" stroke-width="1"/></g>
<text transform="translate(199.57,95) scale(0.8598,1)" font-family="Liberation Sans" font-size="12" fill="#ffffff" >PNP_BEC.Schlib</text>
<g transform="translate(289,82.5)"><path d="M3 2 H10 L13 5 L10 8 H3 Z" fill="#9ab8e8" stroke="#3a5ab0" stroke-width="0.8"/><path d="M0 4 H3 M0 7 H3" stroke="#e07020" stroke-width="1.2"/><path d="M2 3 H8 L11 6 L8 9 H2 Z" fill="#fff4d0" stroke="#e07020" stroke-width="1"/><rect x="5" y="9" width="7" height="6" fill="#c0e0d8" stroke="#3a5ab0" stroke-width="0.8"/><path d="M12 10 H15 M12 13 H15" stroke="#3a5ab0" stroke-width="1"/></g>
<text transform="translate(308.52,95) scale(0.9461,1)" font-family="Liberation Sans" font-size="12" fill="#ffffff" >pnp_becc.Schlib</text>
<g transform="translate(403.3,84.5)"><rect x="0.5" y="0.5" width="13.5" height="10.5" fill="#f0d060" stroke="#504020" stroke-width="1"/><rect x="1.5" y="1.5" width="11.5" height="4" fill="#f8e8a0"/><rect x="7" y="6.5" width="7" height="4.5" fill="#e0a020" stroke="#504020" stroke-width="0.8"/><path d="M8 8.5 H13" stroke="#504020" stroke-width="0.8"/></g>
<text transform="translate(421.60,95) scale(0.9404,1)" font-family="Liberation Sans" font-size="12" fill="#ffffff" >Display.SchDoc *</text>
<rect x="513" y="79" width="111" height="24" fill="#dcdcdc" />
<g transform="translate(519,85)"><rect x="0.5" y="0.5" width="13.5" height="10.5" fill="#f0d060" stroke="#504020" stroke-width="1"/><rect x="1.5" y="1.5" width="11.5" height="4" fill="#f8e8a0"/><rect x="7" y="6.5" width="7" height="4.5" fill="#e0a020" stroke="#504020" stroke-width="0.8"/><path d="M8 8.5 H13" stroke="#504020" stroke-width="0.8"/></g>
<text transform="translate(537.60,94.5) scale(0.9385,1)" font-family="Liberation Sans" font-size="12" fill="#000000" >Power.SchDoc *</text>
<g transform="translate(629,85)"><rect x="0.5" y="0.5" width="15" height="11" fill="#30a050" stroke="#104020" stroke-width="0.8"/><path d="M2 3 H7 M2 6 H7 M2 9 H7 M9 2 V9 M12 2 V7" stroke="#103010" stroke-width="1.2"/><rect x="8" y="10" width="6" height="2.5" fill="#e0e040"/></g>
<text transform="translate(647.13,95) scale(0.9067,1)" font-family="Liberation Sans" font-size="12" fill="#ffffff" >1535670000_01.PcbDoc *</text>
<path d="M907 86 L910.5 89 L907 92 M911 86 L914.5 89 L911 92" stroke="#000" stroke-width="1.4" fill="none"/>
<path d="M908 94.0 L914 94.0 L911 97.0 Z" fill="#000"/>
<rect x="5" y="103" width="914" height="3" fill="#e4e4e4" />
<rect x="5" y="106" width="898" height="843" fill="#fffcf7" />
<defs><pattern id="pDashV" x="0" y="5" width="1" height="6" patternUnits="userSpaceOnUse"><rect x="0" y="0" width="1" height="3" fill="#fff"/></pattern>
<pattern id="pDashH" x="0" y="0" width="6" height="1" patternUnits="userSpaceOnUse"><rect x="0" y="0" width="3" height="1" fill="#fff"/></pattern>
<mask id="mDashV"><rect x="0" y="0" width="1684" height="1014" fill="url(#pDashV)"/></mask>
<mask id="mDashH"><rect x="0" y="0" width="1684" height="1014" fill="url(#pDashH)"/></mask>
<clipPath id="clipCanvas"><rect x="5" y="106" width="898" height="843"/></clipPath></defs>
<rect x="83" y="106" width="1" height="843" fill="#edebe6"/>
<rect x="43" y="106" width="1" height="843" fill="#eeece7" mask="url(#mDashV)"/>
<rect x="162" y="106" width="1" height="843" fill="#edebe6"/>
<rect x="122" y="106" width="1" height="843" fill="#eeece7" mask="url(#mDashV)"/>
<rect x="241" y="106" width="1" height="843" fill="#edebe6"/>
<rect x="202" y="106" width="1" height="843" fill="#eeece7" mask="url(#mDashV)"/>
<rect x="321" y="106" width="1" height="843" fill="#edebe6"/>
<rect x="281" y="106" width="1" height="843" fill="#eeece7" mask="url(#mDashV)"/>
<rect x="400" y="106" width="1" height="843" fill="#edebe6"/>
<rect x="360" y="106" width="1" height="843" fill="#eeece7" mask="url(#mDashV)"/>
<rect x="479" y="106" width="1" height="843" fill="#edebe6"/>
<rect x="440" y="106" width="1" height="843" fill="#eeece7" mask="url(#mDashV)"/>
<rect x="558" y="106" width="1" height="843" fill="#edebe6"/>
<rect x="519" y="106" width="1" height="843" fill="#eeece7" mask="url(#mDashV)"/>
<rect x="638" y="106" width="1" height="843" fill="#edebe6"/>
<rect x="598" y="106" width="1" height="843" fill="#eeece7" mask="url(#mDashV)"/>
<rect x="717" y="106" width="1" height="843" fill="#edebe6"/>
<rect x="677" y="106" width="1" height="843" fill="#eeece7" mask="url(#mDashV)"/>
<rect x="796" y="106" width="1" height="843" fill="#edebe6"/>
<rect x="757" y="106" width="1" height="843" fill="#eeece7" mask="url(#mDashV)"/>
<rect x="875" y="106" width="1" height="843" fill="#edebe6"/>
<rect x="836" y="106" width="1" height="843" fill="#eeece7" mask="url(#mDashV)"/>
<rect x="5" y="143" width="898" height="1" fill="#edebe6"/>
<rect x="5" y="222" width="898" height="1" fill="#edebe6"/>
<rect x="5" y="183" width="898" height="1" fill="#eeece7" mask="url(#mDashH)"/>
<rect x="5" y="302" width="898" height="1" fill="#edebe6"/>
<rect x="5" y="262" width="898" height="1" fill="#eeece7" mask="url(#mDashH)"/>
<rect x="5" y="381" width="898" height="1" fill="#edebe6"/>
<rect x="5" y="341" width="898" height="1" fill="#eeece7" mask="url(#mDashH)"/>
<rect x="5" y="460" width="898" height="1" fill="#edebe6"/>
<rect x="5" y="421" width="898" height="1" fill="#eeece7" mask="url(#mDashH)"/>
<rect x="5" y="540" width="898" height="1" fill="#edebe6"/>
<rect x="5" y="500" width="898" height="1" fill="#eeece7" mask="url(#mDashH)"/>
<rect x="5" y="619" width="898" height="1" fill="#edebe6"/>
<rect x="5" y="579" width="898" height="1" fill="#eeece7" mask="url(#mDashH)"/>
<rect x="5" y="698" width="898" height="1" fill="#edebe6"/>
<rect x="5" y="659" width="898" height="1" fill="#eeece7" mask="url(#mDashH)"/>
<rect x="5" y="778" width="898" height="1" fill="#edebe6"/>
<rect x="5" y="738" width="898" height="1" fill="#eeece7" mask="url(#mDashH)"/>
<rect x="5" y="857" width="898" height="1" fill="#edebe6"/>
<rect x="5" y="817" width="898" height="1" fill="#eeece7" mask="url(#mDashH)"/>
<rect x="5" y="936" width="898" height="1" fill="#edebe6"/>
<rect x="5" y="897" width="898" height="1" fill="#eeece7" mask="url(#mDashH)"/>
<g clip-path="url(#clipCanvas)">
<rect x="341.5" y="361.5" width="78" height="316" fill="#fffdb4" stroke="#8c1010" stroke-width="1"/>
<rect x="360" y="373.29999999999995" width="40" height="15.3" fill="#000" />
<line x1="400" y1="380.9" x2="458" y2="380.9" stroke="#000" stroke-width="3.6" />
<rect x="360" y="412.9599999999999" width="40" height="15.3" fill="#000" />
<line x1="400" y1="420.55999999999995" x2="458" y2="420.55999999999995" stroke="#000" stroke-width="3.6" />
<rect x="360" y="452.61999999999995" width="40" height="15.3" fill="#000" />
<line x1="400" y1="460.21999999999997" x2="458" y2="460.21999999999997" stroke="#000" stroke-width="3.6" />
<rect x="360" y="492.28" width="40" height="15.3" fill="#000" />
<line x1="400" y1="499.88" x2="458" y2="499.88" stroke="#000" stroke-width="3.6" />
<rect x="360" y="531.9399999999999" width="40" height="15.3" fill="#000" />
<line x1="400" y1="539.54" x2="458" y2="539.54" stroke="#000" stroke-width="3.6" />
<rect x="360" y="571.5999999999999" width="40" height="15.3" fill="#000" />
<line x1="400" y1="579.1999999999999" x2="458" y2="579.1999999999999" stroke="#000" stroke-width="3.6" />
<rect x="360" y="611.2599999999999" width="40" height="15.3" fill="#000" />
<line x1="400" y1="618.8599999999999" x2="458" y2="618.8599999999999" stroke="#000" stroke-width="3.6" />
<rect x="360" y="650.92" width="40" height="15.3" fill="#000" />
<line x1="400" y1="658.52" x2="458" y2="658.52" stroke="#000" stroke-width="3.6" />
<path d="M458 380.9 L520.7 380.9" stroke="#000080" stroke-width="3.6" fill="none" stroke-linecap="butt" stroke-linejoin="miter"/>
<path d="M518.9 106 L518.9 420.55999999999995 L458 420.55999999999995" stroke="#000080" stroke-width="3.6" fill="none" stroke-linecap="butt" stroke-linejoin="miter"/>
<path d="M458 460.21999999999997 L639.7 460.21999999999997" stroke="#000080" stroke-width="3.6" fill="none" stroke-linecap="butt" stroke-linejoin="miter"/>
<path d="M458 499.88 L639.7 499.88" stroke="#000080" stroke-width="3.6" fill="none" stroke-linecap="butt" stroke-linejoin="miter"/>
<path d="M458 539.54 L639.7 539.54" stroke="#000080" stroke-width="3.6" fill="none" stroke-linecap="butt" stroke-linejoin="miter"/>
<path d="M458 579.1999999999999 L639.7 579.1999999999999" stroke="#000080" stroke-width="3.6" fill="none" stroke-linecap="butt" stroke-linejoin="miter"/>
<path d="M458 618.8599999999999 L518.9 618.8599999999999 L518.9 658.52" stroke="#000080" stroke-width="3.6" fill="none" stroke-linecap="butt" stroke-linejoin="miter"/>
<path d="M458 658.52 L903 658.52" stroke="#000080" stroke-width="3.6" fill="none" stroke-linecap="butt" stroke-linejoin="miter"/>
<rect x="456.9" y="378.7" width="1.2" height="1.1" fill="#fffcf7" />
<rect x="456.9" y="382.0" width="1.2" height="1.1" fill="#fffcf7" />
<rect x="456.9" y="418.35999999999996" width="1.2" height="1.1" fill="#fffcf7" />
<rect x="456.9" y="421.65999999999997" width="1.2" height="1.1" fill="#fffcf7" />
<rect x="456.9" y="458.02" width="1.2" height="1.1" fill="#fffcf7" />
<rect x="456.9" y="461.32" width="1.2" height="1.1" fill="#fffcf7" />
<rect x="536.4" y="458.02" width="1.2" height="1.1" fill="#fffcf7" />
<rect x="536.4" y="461.32" width="1.2" height="1.1" fill="#fffcf7" />
<rect x="540.4" y="458.02" width="1.2" height="1.1" fill="#fffcf7" />
<rect x="540.4" y="461.32" width="1.2" height="1.1" fill="#fffcf7" />
<rect x="456.9" y="497.68" width="1.2" height="1.1" fill="#fffcf7" />
<rect x="456.9" y="500.98" width="1.2" height="1.1" fill="#fffcf7" />
<rect x="536.4" y="497.68" width="1.2" height="1.1" fill="#fffcf7" />
<rect x="536.4" y="500.98" width="1.2" height="1.1" fill="#fffcf7" />
<rect x="540.4" y="497.68" width="1.2" height="1.1" fill="#fffcf7" />
<rect x="540.4" y="500.98" width="1.2" height="1.1" fill="#fffcf7" />
<rect x="456.9" y="537.3399999999999" width="1.2" height="1.1" fill="#fffcf7" />
<rect x="456.9" y="540.64" width="1.2" height="1.1" fill="#fffcf7" />
<rect x="536.4" y="537.3399999999999" width="1.2" height="1.1" fill="#fffcf7" />
<rect x="536.4" y="540.64" width="1.2" height="1.1" fill="#fffcf7" />
<rect x="540.4" y="537.3399999999999" width="1.2" height="1.1" fill="#fffcf7" />
<rect x="540.4" y="540.64" width="1.2" height="1.1" fill="#fffcf7" />
<rect x="456.9" y="576.9999999999999" width="1.2" height="1.1" fill="#fffcf7" />
<rect x="456.9" y="580.3" width="1.2" height="1.1" fill="#fffcf7" />
<rect x="536.4" y="576.9999999999999" width="1.2" height="1.1" fill="#fffcf7" />
<rect x="536.4" y="580.3" width="1.2" height="1.1" fill="#fffcf7" />
<rect x="540.4" y="576.9999999999999" width="1.2" height="1.1" fill="#fffcf7" />
<rect x="540.4" y="580.3" width="1.2" height="1.1" fill="#fffcf7" />
<rect x="456.9" y="616.6599999999999" width="1.2" height="1.1" fill="#fffcf7" />
<rect x="456.9" y="619.9599999999999" width="1.2" height="1.1" fill="#fffcf7" />
<rect x="456.9" y="656.3199999999999" width="1.2" height="1.1" fill="#fffcf7" />
<rect x="456.9" y="659.62" width="1.2" height="1.1" fill="#fffcf7" />
<polygon points="526.66,384.11 522.11,388.66 515.69,388.66 511.14,384.11 511.14,377.69 515.69,373.14 522.11,373.14 526.66,377.69" fill="#000080"/>
<polygon points="526.66,661.73 522.11,666.28 515.69,666.28 511.14,661.73 511.14,655.31 515.69,650.76 522.11,650.76 526.66,655.31" fill="#000080"/>
<polygon points="684.76,661.73 680.21,666.28 673.79,666.28 669.24,661.73 669.24,655.31 673.79,650.76 680.21,650.76 684.76,655.31" fill="#000080"/>
<text transform="translate(451.50,373.7) scale(0.8017,1)" font-family="Liberation Sans" font-size="35.94" fill="#000">A1</text>
<text transform="translate(451.50,413.36) scale(0.8017,1)" font-family="Liberation Sans" font-size="35.94" fill="#000">A2</text>
<text transform="translate(451.50,453.02) scale(0.8017,1)" font-family="Liberation Sans" font-size="35.94" fill="#000">A3</text>
<text transform="translate(451.50,492.68) scale(0.8017,1)" font-family="Liberation Sans" font-size="35.94" fill="#000">A4</text>
<text transform="translate(451.50,532.34) scale(0.8017,1)" font-family="Liberation Sans" font-size="35.94" fill="#000">A5</text>
<text transform="translate(451.50,572.0) scale(0.8017,1)" font-family="Liberation Sans" font-size="35.94" fill="#000">A6</text>
<text transform="translate(451.50,611.66) scale(0.8017,1)" font-family="Liberation Sans" font-size="35.94" fill="#000">A7</text>
<text transform="translate(451.50,651.32) scale(0.8017,1)" font-family="Liberation Sans" font-size="35.94" fill="#000">A8</text>
<text transform="translate(539.40,452.82) scale(0.8317,1)" font-family="Liberation Sans" font-size="34.64" fill="#800000">ALARM</text>
<text transform="translate(538.00,492.48) scale(0.8317,1)" font-family="Liberation Sans" font-size="34.64" fill="#800000">RST</text>
<text transform="translate(538.00,532.14) scale(0.8317,1)" font-family="Liberation Sans" font-size="34.64" fill="#800000">PWARN</text>
<text transform="translate(538.86,571.8) scale(0.8317,1)" font-family="Liberation Sans" font-size="34.64" fill="#800000">OTEMP</text>
<text transform="translate(339.97,354.3) scale(0.9765,1)" font-family="Liberation Serif" font-size="37.38" fill="#000080" >J500</text>
<text transform="translate(339.89,711) scale(0.9892,1)" font-family="Liberation Serif" font-size="36.31" fill="#000080" >SL 3.50/08/90F 3.2SN OR BX</text>
<rect x="341.5" y="678.5" width="440" height="39" fill="none" stroke="#00ff00" stroke-width="1" stroke-dasharray="3 2"/>
<rect x="337.5" y="357.5" width="7" height="7" fill="#ffffff" stroke="#000" stroke-width="1"/>
<rect x="400.5" y="357.5" width="7" height="7" fill="#ffffff" stroke="#000" stroke-width="1"/>
<rect x="463.5" y="357.5" width="7" height="7" fill="#ffffff" stroke="#000" stroke-width="1"/>
<rect x="337.5" y="516.0" width="7" height="7" fill="#ffffff" stroke="#000" stroke-width="1"/>
<rect x="463.5" y="516.0" width="7" height="7" fill="#ffffff" stroke="#000" stroke-width="1"/>
<rect x="337.5" y="674.2" width="7" height="7" fill="#ffffff" stroke="#000" stroke-width="1"/>
<rect x="400.5" y="674.2" width="7" height="7" fill="#ffffff" stroke="#000" stroke-width="1"/>
<rect x="463.5" y="674.2" width="7" height="7" fill="#ffffff" stroke="#000" stroke-width="1"/>
<path d="M677 106 L677 123" stroke="#000" stroke-width="3.6" fill="none" stroke-linecap="butt" stroke-linejoin="miter"/>
<path d="M677 123 L677 155" stroke="#0000ff" stroke-width="3.6" fill="none" stroke-linecap="butt" stroke-linejoin="miter"/>
<line x1="644.8" y1="155" x2="711" y2="155" stroke="#0000ff" stroke-width="4" />
<line x1="644.8" y1="170.8" x2="711" y2="170.8" stroke="#0000ff" stroke-width="4" />
<path d="M677 170.8 L677 205" stroke="#0000ff" stroke-width="3.6" fill="none" stroke-linecap="butt" stroke-linejoin="miter"/>
<path d="M677 205 L677 239" stroke="#000" stroke-width="3.6" fill="none" stroke-linecap="butt" stroke-linejoin="miter"/>
<path d="M677 239 L677 658.52" stroke="#000080" stroke-width="3.6" fill="none" stroke-linecap="butt" stroke-linejoin="miter"/>
<text transform="translate(669.2,147.40) rotate(-90) scale(0.7503,1)" font-family="Liberation Sans" font-size="26.81" fill="#000080">50V</text>
<text transform="translate(704,147.49) rotate(-90) scale(0.8821,1)" font-family="Liberation Sans" font-size="25.36" fill="#000080">0805</text>
<text transform="translate(670.2,232.37) rotate(-90) scale(0.7962,1)" font-family="Liberation Sans" font-size="36.81" fill="#000080">C13</text>
<text transform="translate(710.6,242.11) rotate(-90) scale(0.7664,1)" font-family="Liberation Sans" font-size="37.68" fill="#000080">100N</text>
<rect x="781" y="116" width="30" height="93.7" fill="none" stroke="#0000ff" stroke-width="4"/>
<path d="M796 106 L796 118" stroke="#000" stroke-width="3.6" fill="none" stroke-linecap="butt" stroke-linejoin="miter"/>
<path d="M775.5 106.5 L779 109.5" stroke="#000080" stroke-width="2"/>
<rect x="779" y="106" width="12" height="1" fill="#c8c8e0" />
<path d="M796 207.5 L796 239.8" stroke="#000" stroke-width="3.6" fill="none" stroke-linecap="butt" stroke-linejoin="miter"/>
<path d="M796 239.8 L796 282 L903 282" stroke="#000080" stroke-width="3.6" fill="none" stroke-linecap="butt" stroke-linejoin="miter"/>
<text transform="translate(773.7,189.61) rotate(-90) scale(0.7959,1)" font-family="Liberation Sans" font-size="36.23" fill="#000080">R55</text>
<text transform="translate(805.5,200.73) rotate(-90) scale(0.7582,1)" font-family="Liberation Sans" font-size="26.81" fill="#000080">MiniMelf</text>
<text transform="translate(845.2,188.82) rotate(-90) scale(0.7709,1)" font-family="Liberation Sans" font-size="37.68" fill="#000080">10K</text>
</g>
<rect x="903" y="106" width="16" height="843" fill="#ededed" />
<path d="M907.5 118 L911 114.5 L914.5 118 Z" fill="#404040"/>
<rect x="903.5" y="280.5" width="14" height="137.5" fill="url(#gThumbV)" stroke="#8e8f8f" stroke-width="1" rx="2"/>
<rect x="907" y="346.0" width="7" height="1" fill="#404040" />
<rect x="907" y="348.5" width="7" height="1" fill="#404040" />
<rect x="907" y="351.0" width="7" height="1" fill="#404040" />
<path d="M907.5 937.5 L914.5 937.5 L911 941 Z" fill="#404040"/>
<rect x="922" y="79" width="757" height="905" fill="#dfdfdf" />
<rect x="922" y="79" width="757" height="23" fill="url(#gHdr)" />
<text transform="translate(926.61,94) scale(0.9426,1)" font-family="Liberation Sans" font-size="12" font-weight="bold" fill="#000" >Libraries</text>
<path d="M1632 87 L1640 87 L1636 93 Z" fill="#000"/>
<path d="M1649 85 H1656 M1650 85 V91 H1655 V85 M1648.5 91.5 H1656.5 M1652.5 91.5 V96" stroke="#000" stroke-width="1.3" fill="none"/>
<path d="M1665 86 L1672 93 M1672 86 L1665 93" stroke="#000" stroke-width="1.8"/>
<rect x="931.5" y="111.5" width="63" height="22" rx="2.5" fill="url(#gBtn)" stroke="#707070" stroke-width="1"/>
<text transform="translate(936.19,127) scale(0.9481,1)" font-family="Liberation Sans" font-size="12" fill="#000" >Libraries...</text>
<rect x="1003.5" y="111.5" width="63" height="22" rx="2.5" fill="url(#gBtn)" stroke="#707070" stroke-width="1"/>
<text transform="translate(1012.55,127) scale(0.9132,1)" font-family="Liberation Sans" font-size="12" fill="#000" >Search...</text>
<rect x="1075.5" y="111.5" width="583" height="22" rx="2.5" fill="url(#gBtn)" stroke="#707070" stroke-width="1"/>
<text transform="translate(1295.14,127) scale(0.8978,1)" font-family="Liberation Sans" font-size="12" fill="#000" >Place Header_Male_08_1x08</text>
<rect x="931" y="142" width="734" height="19.5" fill="#ffffff" />
<rect x="931" y="142" width="734" height="1" fill="#a8a8a8" />
<g transform="translate(937,145)"><path d="M1 2 L7 0 L14 2 L14 12 L7 14.5 L1 12 Z" fill="#c8c8e8" stroke="#a0a0c8" stroke-width="0.6"/><path d="M7 2.5 L14 2 L14 12 L7 14.5 Z" fill="#9898c8"/><path d="M1 2 L7 0 L14 2 L7 2.5 Z" fill="#e8e8f8"/></g>
<text transform="translate(954.90,156.5) scale(0.9380,1)" font-family="Liberation Sans" font-size="12" fill="#000" >Weidmueller_LIB.DbLib - WeidmüllerLib - PCB_Connectors</text>
<path d="M1636 150 L1644 150 L1640 155 Z" fill="#000"/>
<rect x="1652" y="151" width="2" height="2" fill="#000" />
<rect x="1656" y="151" width="2" height="2" fill="#000" />
<rect x="1660" y="151" width="2" height="2" fill="#000" />
<rect x="931" y="170.5" width="734" height="19.5" fill="#ffffff" />
<rect x="931" y="170" width="734" height="1" fill="#a8a8a8" />
<text transform="translate(932.90,184.5) scale(0.8279,1)" font-family="Liberation Sans" font-size="12" fill="#000" >SL_3_50_90F</text>
<path d="M1653.5 178 L1661.5 178 L1657.5 183 Z" fill="#000"/>
<rect x="930.5" y="198.5" width="735" height="162" fill="#ffffff" stroke="#828282" stroke-width="1"/>
<rect x="931" y="199" width="717.5" height="25.6" fill="#a0a0a0" />
<text transform="translate(933.66,215.3) scale(0.9817,1)" font-family="Liberation Sans" font-size="12" fill="#ececec" >Drag a column header here to group by that column</text>
<rect x="931" y="224.6" width="717" height="18" fill="#f0f0f0" />
<rect x="931" y="242.5" width="717" height="1.5" fill="#828282" />
<rect x="1288" y="224.6" width="1" height="18" fill="#828282" />
<rect x="1289" y="224.6" width="1" height="18" fill="#ffffff" />
<rect x="1647" y="224.6" width="1" height="18" fill="#828282" />
<text transform="translate(932.52,237.5) scale(0.9096,1)" font-family="Liberation Sans" font-size="12" fill="#000" >ID1</text>
<text transform="translate(1292.30,237.5) scale(0.9418,1)" font-family="Liberation Sans" font-size="12" fill="#000" >Altium_Symbol</text>
<text transform="translate(932.90,256) scale(0.8253,1)" font-family="Liberation Sans" font-size="12" fill="#000">SL_3_50_90F_02__3_2_OR_BX</text>
<text transform="translate(1291.53,256) scale(0.9056,1)" font-family="Liberation Sans" font-size="12" fill="#000">Header_Male_02_1x02</text>
<text transform="translate(932.90,272) scale(0.8253,1)" font-family="Liberation Sans" font-size="12" fill="#000">SL_3_50_90F_03__3_2_OR_BX</text>
<text transform="translate(1291.53,272) scale(0.9056,1)" font-family="Liberation Sans" font-size="12" fill="#000">Header_Male_03_1x03</text>
<text transform="translate(932.90,288) scale(0.8253,1)" font-family="Liberation Sans" font-size="12" fill="#000">SL_3_50_90F_04__3_2_OR_BX</text>
<text transform="translate(1291.53,288) scale(0.9056,1)" font-family="Liberation Sans" font-size="12" fill="#000">Header_Male_04_1x04</text>
<rect x="931" y="292.5" width="717" height="15.5" fill="#3399ff" />
<rect x="931.5" y="292.5" width="716" height="15" fill="none" stroke="#d08020" stroke-width="1" stroke-dasharray="1 1"/>
<text transform="translate(932.90,304) scale(0.8253,1)" font-family="Liberation Sans" font-size="12" fill="#ffffff">SL_3_50_90F_08__3_2_OR_BX</text>
<text transform="translate(1291.53,304) scale(0.9056,1)" font-family="Liberation Sans" font-size="12" fill="#ffffff">Header_Male_08_1x08</text>
<text transform="translate(932.89,320) scale(0.8431,1)" font-family="Liberation Sans" font-size="12" fill="#000" >SL_3_50_90F_02__3_2_OR_BX_Single</text>
<text transform="translate(1291.53,320) scale(0.9056,1)" font-family="Liberation Sans" font-size="12" fill="#000">Header_Male_02_1x02_Single</text>
<text transform="translate(932.89,336) scale(0.8431,1)" font-family="Liberation Sans" font-size="12" fill="#000" >SL_3_50_90F_03__3_2_OR_BX_Single</text>
<text transform="translate(1291.53,336) scale(0.9056,1)" font-family="Liberation Sans" font-size="12" fill="#000">Header_Male_03_1x03_Single</text>
<text transform="translate(932.89,352) scale(0.8431,1)" font-family="Liberation Sans" font-size="12" fill="#000" >SL_3_50_90F_04__3_2_OR_BX_Single</text>
<text transform="translate(1291.53,352) scale(0.9056,1)" font-family="Liberation Sans" font-size="12" fill="#000">Header_Male_04_1x04_Single</text>
<rect x="1648.5" y="199" width="16.5" height="161" fill="#ededed" />
<path d="M1653 210 L1656.5 206.5 L1660 210 Z" fill="#404040"/>
<rect x="1649.5" y="217.5" width="14" height="107.5" fill="url(#gThumbV)" stroke="#8e8f8f" stroke-width="1" rx="2"/>
<rect x="1653" y="268.0" width="7" height="1" fill="#404040" />
<rect x="1653" y="270.5" width="7" height="1" fill="#404040" />
<rect x="1653" y="273.0" width="7" height="1" fill="#404040" />
<path d="M1653 349.5 L1660 349.5 L1656.5 353 Z" fill="#404040"/>
<text transform="translate(933.63,372) scale(0.9531,1)" font-family="Liberation Sans" font-size="12" fill="#000" >2044 components</text>
<rect x="930.5" y="383.5" width="735" height="181" fill="#fffee8" stroke="#a0a0a0" stroke-width="1"/>
<path d="M1667.8 390.5 L1672.3 386 L1676.8 390.5" stroke="#000" stroke-width="2" fill="none"/>
<rect x="1219.5" y="410.5" width="34" height="136" fill="#fffcb8" stroke="#8c1010" stroke-width="1.2"/>
<rect x="1228" y="414.79999999999995" width="17" height="7.2" fill="#000" />
<line x1="1245" y1="418.4" x2="1272" y2="418.4" stroke="#000" stroke-width="1.6" />
<text transform="translate(1267.34,415.1) scale(1.1246,1)" font-family="Liberation Serif" font-size="14.15" fill="#000" >A1</text>
<rect x="1228" y="431.92999999999995" width="17" height="7.2" fill="#000" />
<line x1="1245" y1="435.53" x2="1272" y2="435.53" stroke="#000" stroke-width="1.6" />
<text transform="translate(1267.34,432.23) scale(1.1149,1)" font-family="Liberation Serif" font-size="14.15" fill="#000" >A2</text>
<rect x="1228" y="449.05999999999995" width="17" height="7.2" fill="#000" />
<line x1="1245" y1="452.65999999999997" x2="1272" y2="452.65999999999997" stroke="#000" stroke-width="1.6" />
<text transform="translate(1267.34,449.36) scale(1.1054,1)" font-family="Liberation Serif" font-size="14.15" fill="#000" >A3</text>
<rect x="1228" y="466.18999999999994" width="17" height="7.2" fill="#000" />
<line x1="1245" y1="469.78999999999996" x2="1272" y2="469.78999999999996" stroke="#000" stroke-width="1.6" />
<text transform="translate(1267.35,466.49) scale(1.0777,1)" font-family="Liberation Serif" font-size="14.15" fill="#000" >A4</text>
<rect x="1228" y="483.31999999999994" width="17" height="7.2" fill="#000" />
<line x1="1245" y1="486.91999999999996" x2="1272" y2="486.91999999999996" stroke="#000" stroke-width="1.6" />
<text transform="translate(1267.34,483.62) scale(1.1054,1)" font-family="Liberation Serif" font-size="14.15" fill="#000" >A5</text>
<rect x="1228" y="500.44999999999993" width="17" height="7.2" fill="#000" />
<line x1="1245" y1="504.04999999999995" x2="1272" y2="504.04999999999995" stroke="#000" stroke-width="1.6" />
<text transform="translate(1267.34,500.75) scale(1.0960,1)" font-family="Liberation Serif" font-size="14.15" fill="#000" >A6</text>
<rect x="1228" y="517.5799999999999" width="17" height="7.2" fill="#000" />
<line x1="1245" y1="521.18" x2="1272" y2="521.18" stroke="#000" stroke-width="1.6" />
<text transform="translate(1267.34,517.88) scale(1.0960,1)" font-family="Liberation Serif" font-size="14.15" fill="#000" >A7</text>
<rect x="1228" y="534.7099999999999" width="17" height="7.2" fill="#000" />
<line x1="1245" y1="538.31" x2="1272" y2="538.31" stroke="#000" stroke-width="1.6" />
<text transform="translate(1267.34,535.01) scale(1.1054,1)" font-family="Liberation Serif" font-size="14.15" fill="#000" >A8</text>
<text transform="translate(1218.87,406.5) scale(1.1874,1)" font-family="Liberation Serif" font-size="14.0" fill="#000080" >J?</text>
<text transform="translate(1218.42,560.5) scale(0.9709,1)" font-family="Liberation Serif" font-size="16.0" fill="#000080" >=Short_text_for_material</text>
<rect x="930.5" y="570.5" width="735" height="61" fill="#ffffff" stroke="#a0a0a0" stroke-width="1"/>
<rect x="931" y="571" width="734" height="17.5" fill="#f0f0f0" />
<rect x="931" y="587.5" width="734" height="1" fill="#a0a0a0" />
<rect x="1297" y="571" width="1" height="17" fill="#a0a0a0" />
<text transform="translate(933.58,583.5) scale(0.9552,1)" font-family="Liberation Sans" font-size="12" fill="#000" >Model Name</text>
<text transform="translate(1300.16,583.5) scale(0.9778,1)" font-family="Liberation Sans" font-size="12" fill="#000" >Model Type</text>
<rect x="931" y="588.5" width="734" height="16" fill="#f0f0f0" />
<g transform="translate(950,589)"><rect x="2" y="1" width="7" height="12" fill="#5a6a98" stroke="#303a60" stroke-width="0.6"/><path d="M0 3 H2 M0 6 H2 M0 9 H2 M9 3 H11 M9 6 H11 M9 9 H11" stroke="#303a60" stroke-width="1"/><rect x="6" y="9" width="6.5" height="6" fill="#ffffff" stroke="#808080" stroke-width="0.6"/><path d="M7 12 L9 14 L12 10" stroke="#20a080" stroke-width="1.3" fill="none"/></g>
<text transform="translate(965.20,601) scale(0.8259,1)" font-family="Liberation Sans" font-size="12" fill="#000" >SL_3_50_90F_08</text>
<text transform="translate(1299.21,601) scale(1.0320,1)" font-family="Liberation Sans" font-size="12" fill="#000" >Footprint</text>
<path d="M1667.8 577.0 L1672.3 572.5 L1676.8 577.0" stroke="#000" stroke-width="2" fill="none"/>
<rect x="930.5" y="637" width="735" height="260" fill="url(#g3d)" stroke="#a0a0a0" stroke-width="1"/>
<path d="M1667.8 644.5 L1672.3 640 L1676.8 644.5" stroke="#000" stroke-width="2" fill="none"/>
<defs><filter id="fBlur" x="-5%" y="-50%" width="110%" height="200%"><feGaussianBlur stdDeviation="1.2"/></filter></defs>
<polygon points="1030.0,839.0 1062.0,839.5 1543.0,858.4 1512.0,871.0 1045.0,852.5" fill="#474747" filter="url(#fBlur)"/>
<rect x="1130.0" y="796.0" width="15.6" height="30.0" fill="#b4b4b4" />
<rect x="1130.0" y="816.0" width="15.6" height="10" fill="#c2c2c2" />
<rect x="1141.8" y="796.0" width="3.8" height="30.0" fill="#a8a8a8" />
<rect x="1177.1" y="797.95" width="15.6" height="30.149999999999977" fill="#b4b4b4" />
<rect x="1177.1" y="818.1" width="15.6" height="10" fill="#c2c2c2" />
<rect x="1188.8999999999999" y="797.95" width="3.8" height="30.149999999999977" fill="#a8a8a8" />
<rect x="1224.2" y="799.9" width="15.6" height="30.299999999999955" fill="#b4b4b4" />
<rect x="1224.2" y="820.1999999999999" width="15.6" height="10" fill="#c2c2c2" />
<rect x="1236.0" y="799.9" width="3.8" height="30.299999999999955" fill="#a8a8a8" />
<rect x="1271.3" y="801.85" width="15.6" height="30.450000000000045" fill="#b4b4b4" />
<rect x="1271.3" y="822.3000000000001" width="15.6" height="10" fill="#c2c2c2" />
<rect x="1283.1" y="801.85" width="3.8" height="30.450000000000045" fill="#a8a8a8" />
<rect x="1318.4" y="803.8" width="15.6" height="30.600000000000023" fill="#b4b4b4" />
<rect x="1318.4" y="824.4" width="15.6" height="10" fill="#c2c2c2" />
<rect x="1330.2" y="803.8" width="3.8" height="30.600000000000023" fill="#a8a8a8" />
<rect x="1365.5" y="805.75" width="15.6" height="30.75" fill="#b4b4b4" />
<rect x="1365.5" y="826.5" width="15.6" height="10" fill="#c2c2c2" />
<rect x="1377.3" y="805.75" width="3.8" height="30.75" fill="#a8a8a8" />
<rect x="1412.6000000000001" y="807.7" width="15.6" height="30.899999999999977" fill="#b4b4b4" />
<rect x="1412.6000000000001" y="828.6" width="15.6" height="10" fill="#c2c2c2" />
<rect x="1424.4" y="807.7" width="3.8" height="30.899999999999977" fill="#a8a8a8" />
<rect x="1459.7" y="809.65" width="15.6" height="31.049999999999955" fill="#b4b4b4" />
<rect x="1459.7" y="830.6999999999999" width="15.6" height="10" fill="#c2c2c2" />
<rect x="1471.5" y="809.65" width="3.8" height="31.049999999999955" fill="#a8a8a8" />
<polygon points="1046.2,689.7 1071.7,680.0 1542.0,699.5 1514.0,710.4" fill="#b85a28" />
<polygon points="1071.7,677.0 1135.0,679.6 1129.0,683.6 1065.7,681.0" fill="#b65928" />
<polygon points="1147.3,680.1 1182.0,681.6 1176.0,685.6 1141.3,684.1" fill="#b65928" />
<polygon points="1194.3,682.1 1229.0,683.5 1223.0,687.5 1188.3,686.1" fill="#b65928" />
<polygon points="1241.4,684.0 1276.1,685.5 1270.1,689.5 1235.4,688.0" fill="#b65928" />
<polygon points="1288.4,686.0 1323.2,687.4 1317.2,691.4 1282.4,690.0" fill="#b65928" />
<polygon points="1335.5,687.9 1370.2,689.4 1364.2,693.4 1329.5,691.9" fill="#b65928" />
<polygon points="1382.5,689.9 1417.2,691.3 1411.2,695.3 1376.5,693.9" fill="#b65928" />
<polygon points="1429.6,691.8 1464.3,693.3 1458.3,697.3 1423.6,695.8" fill="#b65928" />
<polygon points="1476.6,693.8 1542.0,696.5 1536.0,700.5 1470.6,697.8" fill="#b65928" />
<polygon points="1514.0,710.4 1542.0,696.5 1542.0,797.4 1514.0,810.8" fill="#bf5d29" />
<polygon points="1046.2,689.7 1514.0,710.4 1514.0,810.8 1043.6,791.6" fill="#d06a30" />
<polygon points="1091.0,701.7 1110.0,696.5 1110.0,792.3 1091.0,790.5" fill="#c0602b" />
<polygon points="1091.0,701.7 1110.0,696.5 1110.0,704.5 1091.0,709.7" fill="#b25526" />
<polygon points="1098.0,712.0 1136.5,688.0 1124.0,688.5 1109.0,699.5 1105.0,706.5" fill="#a54e21" />
<polygon points="1109.0,699.5 1124.0,688.5 1113.0,688.5 1106.0,694.5" fill="#d47238" />
<polygon points="1145.0,714.1 1183.5,690.1 1171.0,690.6 1156.0,701.6 1152.0,708.6" fill="#a54e21" />
<polygon points="1156.0,701.6 1171.0,690.6 1160.0,690.6 1153.0,696.6" fill="#d47238" />
<polygon points="1192.1,716.2 1230.6,692.2 1218.1,692.7 1203.1,703.7 1199.1,710.7" fill="#a54e21" />
<polygon points="1203.1,703.7 1218.1,692.7 1207.1,692.7 1200.1,698.7" fill="#d47238" />
<polygon points="1239.2,718.3 1277.7,694.3 1265.2,694.8 1250.2,705.8 1246.2,712.8" fill="#a54e21" />
<polygon points="1250.2,705.8 1265.2,694.8 1254.2,694.8 1247.2,700.8" fill="#d47238" />
<polygon points="1286.2,720.4 1324.7,696.4 1312.2,696.9 1297.2,707.9 1293.2,714.9" fill="#a54e21" />
<polygon points="1297.2,707.9 1312.2,696.9 1301.2,696.9 1294.2,702.9" fill="#d47238" />
<polygon points="1333.2,722.4 1371.8,698.4 1359.2,698.9 1344.2,709.9 1340.2,716.9" fill="#a54e21" />
<polygon points="1344.2,709.9 1359.2,698.9 1348.2,698.9 1341.2,704.9" fill="#d47238" />
<polygon points="1380.3,724.5 1418.8,700.5 1406.3,701.0 1391.3,712.0 1387.3,719.0" fill="#a54e21" />
<polygon points="1391.3,712.0 1406.3,701.0 1395.3,701.0 1388.3,707.0" fill="#d47238" />
<polygon points="1427.3,726.6 1465.8,702.6 1453.3,703.1 1438.3,714.1 1434.3,721.1" fill="#a54e21" />
<polygon points="1438.3,714.1 1453.3,703.1 1442.3,703.1 1435.3,709.1" fill="#d47238" />
<polygon points="1114.0,717.5 1153.0,719.0 1153.0,759.5 1114.0,758.0" fill="#c8642d" />
<polygon points="1119.0,723.5 1148.0,725.0 1148.0,753.0 1119.0,752.0" fill="#cc6830" />
<polygon points="1114.0,750.0 1145.0,751.5 1153.0,759.5 1114.0,758.0" fill="#a34c20" />
<polygon points="1114.0,717.5 1119.0,731.5 1119.0,741.5 1114.0,743.5" fill="#9c4a1e" />
<polygon points="1111.0,736.0 1121.0,732.0 1138.0,731.5 1138.0,745.0 1124.0,750.5 1111.0,750.5" fill="#a8a8a8" />
<polygon points="1111.0,736.0 1121.0,732.0 1138.0,731.5 1124.0,737.0" fill="#c4c4c4" />
<polygon points="1111.0,737.0 1124.0,737.0 1124.0,750.5 1111.0,750.5" fill="#b8b8b8" />
<rect x="1111.0" y="747.0" width="13" height="3.5" fill="#9a9a9a" />
<polygon points="1161.0,719.4 1200.0,720.9 1200.0,761.4 1161.0,759.9" fill="#c8642d" />
<polygon points="1166.0,725.4 1195.0,726.9 1195.0,754.9 1166.0,753.9" fill="#cc6830" />
<polygon points="1161.0,751.9 1192.0,753.4 1200.0,761.4 1161.0,759.9" fill="#a34c20" />
<polygon points="1161.0,719.4 1166.0,733.4 1166.0,743.4 1161.0,745.4" fill="#9c4a1e" />
<polygon points="1158.0,737.9 1168.0,733.9 1185.0,733.4 1185.0,746.9 1171.0,752.4 1158.0,752.4" fill="#a8a8a8" />
<polygon points="1158.0,737.9 1168.0,733.9 1185.0,733.4 1171.0,738.9" fill="#c4c4c4" />
<polygon points="1158.0,738.9 1171.0,738.9 1171.0,752.4 1158.0,752.4" fill="#b8b8b8" />
<rect x="1158.05" y="748.9" width="13" height="3.5" fill="#9a9a9a" />
<polygon points="1208.1,721.3 1247.1,722.8 1247.1,763.3 1208.1,761.8" fill="#c8642d" />
<polygon points="1213.1,727.3 1242.1,728.8 1242.1,756.8 1213.1,755.8" fill="#cc6830" />
<polygon points="1208.1,753.8 1239.1,755.3 1247.1,763.3 1208.1,761.8" fill="#a34c20" />
<polygon points="1208.1,721.3 1213.1,735.3 1213.1,745.3 1208.1,747.3" fill="#9c4a1e" />
<polygon points="1205.1,739.8 1215.1,735.8 1232.1,735.3 1232.1,748.8 1218.1,754.3 1205.1,754.3" fill="#a8a8a8" />
<polygon points="1205.1,739.8 1215.1,735.8 1232.1,735.3 1218.1,740.8" fill="#c4c4c4" />
<polygon points="1205.1,740.8 1218.1,740.8 1218.1,754.3 1205.1,754.3" fill="#b8b8b8" />
<rect x="1205.1" y="750.8" width="13" height="3.5" fill="#9a9a9a" />
<polygon points="1255.2,723.2 1294.2,724.7 1294.2,765.2 1255.2,763.7" fill="#c8642d" />
<polygon points="1260.2,729.2 1289.2,730.7 1289.2,758.7 1260.2,757.7" fill="#cc6830" />
<polygon points="1255.2,755.7 1286.2,757.2 1294.2,765.2 1255.2,763.7" fill="#a34c20" />
<polygon points="1255.2,723.2 1260.2,737.2 1260.2,747.2 1255.2,749.2" fill="#9c4a1e" />
<polygon points="1252.2,741.7 1262.2,737.7 1279.2,737.2 1279.2,750.7 1265.2,756.2 1252.2,756.2" fill="#a8a8a8" />
<polygon points="1252.2,741.7 1262.2,737.7 1279.2,737.2 1265.2,742.7" fill="#c4c4c4" />
<polygon points="1252.2,742.7 1265.2,742.7 1265.2,756.2 1252.2,756.2" fill="#b8b8b8" />
<rect x="1252.15" y="752.7" width="13" height="3.5" fill="#9a9a9a" />
<polygon points="1302.2,725.1 1341.2,726.6 1341.2,767.1 1302.2,765.6" fill="#c8642d" />
<polygon points="1307.2,731.1 1336.2,732.6 1336.2,760.6 1307.2,759.6" fill="#cc6830" />
<polygon points="1302.2,757.6 1333.2,759.1 1341.2,767.1 1302.2,765.6" fill="#a34c20" />
<polygon points="1302.2,725.1 1307.2,739.1 1307.2,749.1 1302.2,751.1" fill="#9c4a1e" />
<polygon points="1299.2,743.6 1309.2,739.6 1326.2,739.1 1326.2,752.6 1312.2,758.1 1299.2,758.1" fill="#a8a8a8" />
<polygon points="1299.2,743.6 1309.2,739.6 1326.2,739.1 1312.2,744.6" fill="#c4c4c4" />
<polygon points="1299.2,744.6 1312.2,744.6 1312.2,758.1 1299.2,758.1" fill="#b8b8b8" />
<rect x="1299.2" y="754.6" width="13" height="3.5" fill="#9a9a9a" />
<polygon points="1349.2,727.0 1388.2,728.5 1388.2,769.0 1349.2,767.5" fill="#c8642d" />
<polygon points="1354.2,733.0 1383.2,734.5 1383.2,762.5 1354.2,761.5" fill="#cc6830" />
<polygon points="1349.2,759.5 1380.2,761.0 1388.2,769.0 1349.2,767.5" fill="#a34c20" />
<polygon points="1349.2,727.0 1354.2,741.0 1354.2,751.0 1349.2,753.0" fill="#9c4a1e" />
<polygon points="1346.2,745.5 1356.2,741.5 1373.2,741.0 1373.2,754.5 1359.2,760.0 1346.2,760.0" fill="#a8a8a8" />
<polygon points="1346.2,745.5 1356.2,741.5 1373.2,741.0 1359.2,746.5" fill="#c4c4c4" />
<polygon points="1346.2,746.5 1359.2,746.5 1359.2,760.0 1346.2,760.0" fill="#b8b8b8" />
<rect x="1346.25" y="756.5" width="13" height="3.5" fill="#9a9a9a" />
<polygon points="1396.3,728.9 1435.3,730.4 1435.3,770.9 1396.3,769.4" fill="#c8642d" />
<polygon points="1401.3,734.9 1430.3,736.4 1430.3,764.4 1401.3,763.4" fill="#cc6830" />
<polygon points="1396.3,761.4 1427.3,762.9 1435.3,770.9 1396.3,769.4" fill="#a34c20" />
<polygon points="1396.3,728.9 1401.3,742.9 1401.3,752.9 1396.3,754.9" fill="#9c4a1e" />
<polygon points="1393.3,747.4 1403.3,743.4 1420.3,742.9 1420.3,756.4 1406.3,761.9 1393.3,761.9" fill="#a8a8a8" />
<polygon points="1393.3,747.4 1403.3,743.4 1420.3,742.9 1406.3,748.4" fill="#c4c4c4" />
<polygon points="1393.3,748.4 1406.3,748.4 1406.3,761.9 1393.3,761.9" fill="#b8b8b8" />
<rect x="1393.3" y="758.4" width="13" height="3.5" fill="#9a9a9a" />
<polygon points="1443.3,730.8 1482.3,732.3 1482.3,772.8 1443.3,771.3" fill="#c8642d" />
<polygon points="1448.3,736.8 1477.3,738.3 1477.3,766.3 1448.3,765.3" fill="#cc6830" />
<polygon points="1443.3,763.3 1474.3,764.8 1482.3,772.8 1443.3,771.3" fill="#a34c20" />
<polygon points="1443.3,730.8 1448.3,744.8 1448.3,754.8 1443.3,756.8" fill="#9c4a1e" />
<polygon points="1440.3,749.3 1450.3,745.3 1467.3,744.8 1467.3,758.3 1453.3,763.8 1440.3,763.8" fill="#a8a8a8" />
<polygon points="1440.3,749.3 1450.3,745.3 1467.3,744.8 1453.3,750.3" fill="#c4c4c4" />
<polygon points="1440.3,750.3 1453.3,750.3 1453.3,763.8 1440.3,763.8" fill="#b8b8b8" />
<rect x="1440.35" y="760.3" width="13" height="3.5" fill="#9a9a9a" />
<path d="M1110.3 781.3 Q1131.9 754.3 1153.5 784.3 L1153.5 794.3 L1110.3 794.3 Z" fill="#c4622c"/>
<path d="M1132.3 788.3 Q1148.3 772.3 1157.3 785.3 L1157.3 794.3 L1136.3 794.3 Z" fill="#b45727"/>
<path d="M1094.8 791.3 Q1113.3 764.3 1135.0 792.3 L1135.0 794.8 L1094.8 794.8 Z" fill="#cc6a31"/>
<path d="M1157.3 783.2 Q1178.9 756.2 1200.5 786.2 L1200.5 796.2 L1157.3 796.2 Z" fill="#c4622c"/>
<path d="M1179.3 790.2 Q1195.3 774.2 1204.3 787.2 L1204.3 796.2 L1183.3 796.2 Z" fill="#b45727"/>
<path d="M1141.8 793.2 Q1160.3 766.2 1182.0 794.2 L1182.0 796.7 L1141.8 796.7 Z" fill="#cc6a31"/>
<path d="M1204.4 785.2 Q1226.0 758.2 1247.6 788.2 L1247.6 798.2 L1204.4 798.2 Z" fill="#c4622c"/>
<path d="M1226.4 792.2 Q1242.4 776.2 1251.4 789.2 L1251.4 798.2 L1230.4 798.2 Z" fill="#b45727"/>
<path d="M1188.9 795.2 Q1207.4 768.2 1229.1 796.2 L1229.1 798.7 L1188.9 798.7 Z" fill="#cc6a31"/>
<path d="M1251.4 787.1 Q1273.0 760.1 1294.6 790.1 L1294.6 800.1 L1251.4 800.1 Z" fill="#c4622c"/>
<path d="M1273.4 794.1 Q1289.4 778.1 1298.4 791.1 L1298.4 800.1 L1277.4 800.1 Z" fill="#b45727"/>
<path d="M1235.9 797.1 Q1254.4 770.1 1276.1 798.1 L1276.1 800.6 L1235.9 800.6 Z" fill="#cc6a31"/>
<path d="M1298.5 789.0 Q1320.1 762.0 1341.7 792.0 L1341.7 802.0 L1298.5 802.0 Z" fill="#c4622c"/>
<path d="M1320.5 796.0 Q1336.5 780.0 1345.5 793.0 L1345.5 802.0 L1324.5 802.0 Z" fill="#b45727"/>
<path d="M1283.0 799.0 Q1301.5 772.0 1323.2 800.0 L1323.2 802.5 L1283.0 802.5 Z" fill="#cc6a31"/>
<path d="M1345.5 790.9 Q1367.1 763.9 1388.8 793.9 L1388.8 803.9 L1345.5 803.9 Z" fill="#c4622c"/>
<path d="M1367.5 797.9 Q1383.5 781.9 1392.5 794.9 L1392.5 803.9 L1371.5 803.9 Z" fill="#b45727"/>
<path d="M1330.0 800.9 Q1348.5 773.9 1370.2 801.9 L1370.2 804.4 L1330.0 804.4 Z" fill="#cc6a31"/>
<path d="M1392.6 792.8 Q1414.2 765.8 1435.8 795.8 L1435.8 805.8 L1392.6 805.8 Z" fill="#c4622c"/>
<path d="M1414.6 799.8 Q1430.6 783.8 1439.6 796.8 L1439.6 805.8 L1418.6 805.8 Z" fill="#b45727"/>
<path d="M1377.1 802.8 Q1395.6 775.8 1417.3 803.8 L1417.3 806.3 L1377.1 806.3 Z" fill="#cc6a31"/>
<path d="M1439.6 794.8 Q1461.2 767.8 1482.8 797.8 L1482.8 807.8 L1439.6 807.8 Z" fill="#c4622c"/>
<path d="M1461.6 801.8 Q1477.6 785.8 1486.6 798.8 L1486.6 807.8 L1465.6 807.8 Z" fill="#b45727"/>
<path d="M1424.1 804.8 Q1442.6 777.8 1464.3 805.8 L1464.3 808.3 L1424.1 808.3 Z" fill="#cc6a31"/>
<polygon points="1046.2,689.7 1091.0,691.7 1091.0,793.5 1043.6,791.6" fill="#d06a30" />
<polygon points="1467.4,708.3 1514.0,710.4 1514.0,810.8 1467.4,808.9" fill="#d06a30" />
<circle cx="1067.5" cy="740.3" r="10.5" fill="none" stroke="#bb5a28" stroke-width="2.4"/>
<path d="M1065.5 732.3 A8 8 0 0 0 1068.5 748.3 A6.5 8 0 0 1 1065.5 732.3 Z" fill="#a94f22"/>
<circle cx="1492.3" cy="758" r="10.5" fill="none" stroke="#bb5a28" stroke-width="2.4"/>
<path d="M1490.3 750 A8 8 0 0 0 1493.3 766 A6.5 8 0 0 1 1490.3 750 Z" fill="#a94f22"/>
<rect x="939.5" y="863.5" width="24" height="24" fill="#f4f4f4" stroke="#606060" stroke-width="1"/>
<g transform="translate(943,867)"><path d="M1 4 L6 1 L9 3 L5 6 Z" fill="#8090b0" stroke="#404868" stroke-width="0.6"/><path d="M5 5 L1 12" stroke="#c08030" stroke-width="1.6"/><path d="M8 8 H16 L13 12 V16 L11 15 V12 Z" fill="#e0e8f0" stroke="#506080" stroke-width="0.8"/></g>
<rect x="930.5" y="903.5" width="735" height="53" fill="#ffffff" stroke="#a0a0a0" stroke-width="1"/>
<rect x="931" y="904" width="734" height="29.5" fill="#f0f0f0" />
<rect x="931" y="933" width="734" height="1" fill="#a0a0a0" />
<rect x="1146.5" y="904" width="1" height="29.5" fill="#a0a0a0" />
<rect x="1362" y="904" width="1" height="29.5" fill="#a0a0a0" />
<rect x="1578.5" y="904" width="1" height="29.5" fill="#a0a0a0" />
<text transform="translate(933.81,916) scale(0.9834,1)" font-family="Liberation Sans" font-size="12" fill="#000" >Supplier</text>
<text transform="translate(1149.54,916) scale(0.9986,1)" font-family="Liberation Sans" font-size="12" fill="#000" >Manufacturer</text>
<text transform="translate(1366.05,916) scale(0.9894,1)" font-family="Liberation Sans" font-size="12" fill="#000" >Description</text>
<text transform="translate(1612.07,916) scale(0.9640,1)" font-family="Liberation Sans" font-size="12" fill="#000" >Unit Price</text>
<path d="M1131 921 L1134 916 L1137 921" stroke="#b0b0b0" stroke-width="0.8" fill="none"/>
<path d="M1667.8 909.5 L1672.3 905 L1676.8 909.5" stroke="#000" stroke-width="2" fill="none"/>
<path d="M1668 957 L1672.3 961.5 L1676.5 957 M1668 960 L1672.3 964 L1676.5 960" stroke="#000" stroke-width="1.6" fill="none"/>
<rect x="5" y="949" width="898" height="15.5" fill="#ededed" />
<rect x="903" y="949" width="16" height="15.5" fill="#ededed" />
<path d="M14.5 953 L11 956.5 L14.5 960 Z" fill="#404040"/>
<path d="M891 953 L894.5 956.5 L891 960 Z" fill="#404040"/>
<rect x="113.5" y="949.5" width="112" height="14" fill="url(#gThumbH)" stroke="#8e8f8f" stroke-width="1" rx="2"/>
<rect x="166.0" y="953" width="1" height="7" fill="#404040" />
<rect x="168.5" y="953" width="1" height="7" fill="#404040" />
<rect x="171.0" y="953" width="1" height="7" fill="#404040" />
<rect x="5" y="964.5" width="914" height="20" fill="#f0f0f0" />
<rect x="5" y="965.5" width="43" height="19" fill="#e2e2e2" />
<text transform="translate(10.75,979) scale(0.8897,1)" font-family="Liberation Sans" font-size="12" font-weight="bold" fill="#000" >Editor</text>
<rect x="48.5" y="965.5" width="51.5" height="18" fill="#ffffff" stroke="#c8c8c8" stroke-width="1"/>
<text transform="translate(54.67,979) scale(0.8676,1)" font-family="Liberation Sans" font-size="12" fill="#000" >POWER</text>
<rect x="753.6" y="966" width="1" height="18" fill="#d0d0d0" />
<rect x="785.6" y="966" width="1" height="18" fill="#d0d0d0" />
<rect x="818.6" y="966" width="1" height="18" fill="#d0d0d0" />
<rect x="883.3" y="966" width="1" height="18" fill="#d0d0d0" />
<rect x="918.4" y="964.5" width="1" height="20" fill="#c8c8c8" />
<g transform="translate(762,966)"><path d="M2.5 10.5 L10.5 2 Q12 1 13.5 2.5 Q14.5 4 13 5.5 L5 13 Z" fill="#dce6f8" stroke="#4a5a90" stroke-width="1"/><path d="M2.5 10.5 L5 13 L0.8 14 Z" fill="#f0d890" stroke="#6a5030" stroke-width="0.6"/><rect x="0" y="13" width="6" height="4" fill="#6a6af8"/><rect x="10" y="13" width="6" height="4" fill="#6a6af8"/></g>
<g transform="translate(788,969)"><path d="M5 0.5 L8 3.5 L5 6.5 L2 3.5 Z" fill="#ffff20" stroke="#202020" stroke-width="1"/><path d="M5 7.5 L8 10.5 L5 13.5 L2 10.5 Z" fill="#ffff20" stroke="#202020" stroke-width="1"/><path d="M11 2 L15.5 6.5 L11 11 Z" fill="#808080"/><path d="M17 2.5 H27.5 L23.5 7 V11 H20.5 V7 Z" fill="#f0f0f0" stroke="#303030" stroke-width="1.1"/></g>
<text transform="translate(823.62,979) scale(0.9163,1)" font-family="Liberation Sans" font-size="12" fill="#707070" >Mask Level</text>
<text transform="translate(888.06,979) scale(0.9049,1)" font-family="Liberation Sans" font-size="12" fill="#707070" >Clear</text>
<rect x="922" y="956.5" width="757" height="9" fill="#dfdfdf" />
<rect x="922" y="965.5" width="757" height="19" fill="#f0f0f0" />
<path d="M1668 956 L1672.3 960.5 L1676.5 956 M1668 959.5 L1672.3 963.5 L1676.5 959.5" stroke="#000" stroke-width="1.6" fill="none"/>
<rect x="922" y="965.5" width="52" height="18" fill="#ffffff" stroke="#c0c0c0" stroke-width="1"/>
<text transform="translate(927.59,979) scale(0.9432,1)" font-family="Liberation Sans" font-size="12" fill="#50505c" >Projects</text>
<rect x="974.5" y="965.5" width="56" height="18.5" fill="#e6e6e6" stroke="#c0c0c0" stroke-width="1"/>
<text transform="translate(980.79,979) scale(0.8495,1)" font-family="Liberation Sans" font-size="12" font-weight="bold" fill="#000" >Libraries</text>
<rect x="1030.5" y="965.5" width="102" height="18" fill="#ffffff" stroke="#c0c0c0" stroke-width="1"/>
<text transform="translate(1036.42,979) scale(0.9682,1)" font-family="Liberation Sans" font-size="12" fill="#50505c" >Storage Manager</text>
<rect x="1132.5" y="965.5" width="63" height="18" fill="#ffffff" stroke="#c0c0c0" stroke-width="1"/>
<text transform="translate(1138.11,979) scale(0.9291,1)" font-family="Liberation Sans" font-size="12" fill="#50505c" >Messages</text>
<rect x="2" y="984.5" width="1680" height="3.5" fill="#ababab" />
<rect x="2" y="986.5" width="1680" height="1.5" fill="#6a6a6a" />
<rect x="2" y="988" width="1680" height="24" fill="#f0f0f0" />
<text transform="translate(6.47,1003.4) scale(0.9055,1)" font-family="Liberation Sans" font-size="12" fill="#000" >X:2950mil Y:8300mil</text>
<text transform="translate(117.02,1003.4) scale(0.9628,1)" font-family="Liberation Sans" font-size="12" fill="#000" >Grid:50mil</text>
<rect x="428" y="993" width="1" height="16" fill="#a0a0a0" />
<rect x="853.5" y="993" width="1" height="16" fill="#a0a0a0" />
<rect x="1337.2" y="992.5" width="50.200000000000045" height="17" fill="#f7f7f7" stroke="#d4d4d4" stroke-width="1"/>
<text transform="translate(1344.36,1005) scale(0.8929,1)" font-family="Liberation Sans" font-size="12" fill="#3a3a3a" >System</text>
<rect x="1345" y="1007" width="6" height="1" fill="#3a3a3a" />
<rect x="1388.4" y="992.5" width="101.39999999999986" height="17" fill="#f7f7f7" stroke="#d4d4d4" stroke-width="1"/>
<text transform="translate(1396.47,1005) scale(0.9669,1)" font-family="Liberation Sans" font-size="12" fill="#3a3a3a" >Design Compiler</text>
<rect x="1397.5" y="1007" width="7.5" height="1" fill="#3a3a3a" />
<rect x="1490.8" y="992.5" width="41.799999999999955" height="17" fill="#f7f7f7" stroke="#d4d4d4" stroke-width="1"/>
<text transform="translate(1501.67,1005) scale(0.8838,1)" font-family="Liberation Sans" font-size="12" fill="#3a3a3a" >SCH</text>
<rect x="1509" y="1007" width="7" height="1" fill="#3a3a3a" />
<rect x="1533.6" y="992.5" width="41.90000000000009" height="17" fill="#f7f7f7" stroke="#d4d4d4" stroke-width="1"/>
<text transform="translate(1541.72,1005) scale(1.0180,1)" font-family="Liberation Sans" font-size="12" fill="#3a3a3a" >Help</text>
<rect x="1543" y="1007" width="7" height="1" fill="#3a3a3a" />
<rect x="1576.5" y="992.5" width="78.70000000000005" height="17" fill="#f7f7f7" stroke="#d4d4d4" stroke-width="1"/>
<text transform="translate(1583.73,1005) scale(0.9905,1)" font-family="Liberation Sans" font-size="12" fill="#3a3a3a" >Instruments</text>
<rect x="1584.8" y="1007" width="2.2000000000000455" height="1" fill="#3a3a3a" />
<rect x="1660.5" y="992.5" width="17" height="17" fill="#f7f7f7" stroke="#d4d4d4" stroke-width="1"/>
<text transform="translate(1662.16,1005) scale(0.7346,1)" font-family="Liberation Sans" font-size="12" fill="#3a3a3a" >&gt; &gt;</text></svg></body></html>
